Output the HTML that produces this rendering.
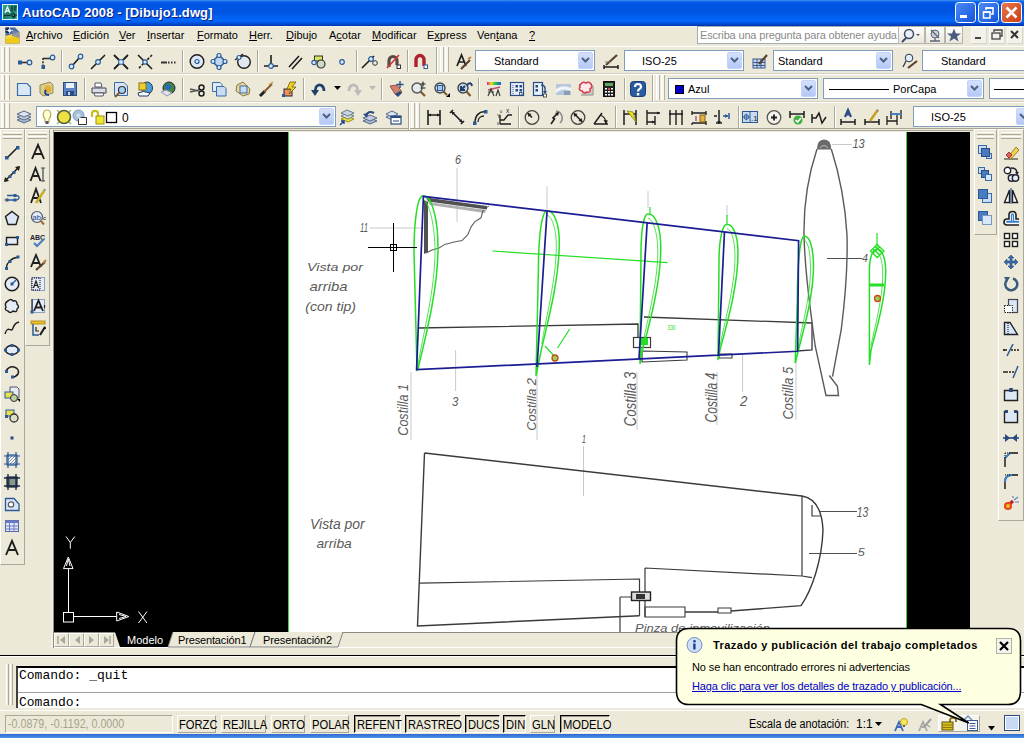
<!DOCTYPE html>
<html><head><meta charset="utf-8"><title>AutoCAD 2008</title>
<style>
*{margin:0;padding:0;box-sizing:border-box}
html,body{width:1024px;height:738px;overflow:hidden}
body{position:relative;background:#ECE9D8;font-family:"Liberation Sans",sans-serif;font-size:11px;color:#000}
.a{position:absolute}
.t{white-space:nowrap;line-height:1}
svg{overflow:visible}
u{text-decoration:underline;text-underline-offset:1px}
</style></head><body>

<div class="a" style="left:0px;top:0px;width:1024px;height:26px;background:linear-gradient(to bottom,#3C8EF3 0px,#0A5FE8 2px,#0055E5 4px,#0053E1 12px,#0262F5 18px,#0567FA 21px,#0048D0 24px,#0035A8 26px)"></div>
<svg class="a" style="left:2px;top:4px;" width="16" height="16" viewBox="0 0 16 16"><rect x="0.5" y="0.5" width="15" height="15" fill="#2A8A7A" stroke="#D8F8F0"/><path d="M1 1 H15 V15 H1Z" fill="url(#tealg)"/><path d="M3 9 L5.5 3 L8 9 M4 7 H7" stroke="#E8FFF8" stroke-width="1.3" fill="none"/><path d="M10 2 V7 M13 2 V7 M2 11.5 H8 M13 10 V14" stroke="#0E3A34" stroke-width="1.2"/><rect x="10" y="10" width="2.5" height="2.5" fill="none" stroke="#0A2A24"/><path d="M11.2 8 V9 M11.2 13 V15 M8 11.2 H9.5 M13.5 11.2 H15" stroke="#0A2A24"/></svg>
<svg width="0" height="0" style="position:absolute"><defs><linearGradient id="tealg" x1="0" y1="0" x2="1" y2="1"><stop offset="0" stop-color="#3AA890"/><stop offset="0.5" stop-color="#1E7868"/><stop offset="1" stop-color="#4AB8A8"/></linearGradient></defs></svg>
<div class="a t" style="left:22px;top:6px;color:#fff;font-weight:bold;font-size:13px;text-shadow:1px 1px 0 #0A1E80;letter-spacing:0.1px">AutoCAD 2008 - [Dibujo1.dwg]</div>
<svg class="a" style="left:955px;top:2px;" width="21" height="21" viewBox="0 0 21 21"><rect x="0.5" y="0.5" width="20" height="20" rx="3" fill="url(#gb)" stroke="#fff"/><rect x="5" y="13" width="7" height="3" fill="#fff"/></svg>
<svg class="a" style="left:978px;top:2px;" width="21" height="21" viewBox="0 0 21 21"><rect x="0.5" y="0.5" width="20" height="20" rx="3" fill="url(#gb)" stroke="#fff"/><rect x="5.5" y="10" width="6.5" height="6" fill="none" stroke="#fff" stroke-width="1.5"/><rect x="5" y="9.3" width="7.5" height="1.6" fill="#fff"/><path d="M8 8 V6 H15 V12 H13" fill="none" stroke="#fff" stroke-width="1.5"/><rect x="7.5" y="5.3" width="8" height="1.6" fill="#fff"/></svg>
<svg class="a" style="left:1001px;top:2px;" width="21" height="21" viewBox="0 0 21 21"><rect x="0.5" y="0.5" width="20" height="20" rx="3" fill="url(#gr)" stroke="#fff"/><path d="M5.5 5.5 L15.5 15.5 M15.5 5.5 L5.5 15.5" stroke="#fff" stroke-width="2.6"/></svg>
<svg width="0" height="0" style="position:absolute"><defs><linearGradient id="gb" x1="0" y1="0" x2="1" y2="1"><stop offset="0" stop-color="#4C8CF8"/><stop offset="1" stop-color="#1453D8"/></linearGradient><linearGradient id="gr" x1="0" y1="0" x2="1" y2="1"><stop offset="0" stop-color="#E8774E"/><stop offset="1" stop-color="#CC3D12"/></linearGradient></defs></svg>
<div class="a" style="left:0px;top:26px;width:1024px;height:20px;background:#ECE9D8;border-top:1px solid #F4F3EE"></div>
<svg class="a" style="left:5px;top:27px;" width="15" height="17" viewBox="0 0 15 17"><path d="M0.5 0.5 H10 L14.5 5 V16.5 H0.5 Z" fill="#4A6AA0"/><path d="M0.5 16.5 V9 L14.5 5 V16.5 Z" fill="#F2C818"/><path d="M0.5 9 L14.5 5 V9 L0.5 12 Z" fill="#F8E060" opacity="0.6"/><path d="M7 3 L14.5 5 V11 L7 9 Z" fill="#7A8AB8" opacity="0.8"/><path d="M0.5 0.5 H4 V6 H0.5Z" fill="#1A2A60"/><circle cx="4.5" cy="3.5" r="1.6" fill="#fff"/><path d="M4.5 0 V7 M1 3.5 H8" stroke="#fff" stroke-width="0.6"/></svg>
<div class="a t" style="left:26px;top:30px;font-size:11px"><u>A</u>rchivo</div>
<div class="a t" style="left:73px;top:30px;font-size:11px"><u>E</u>dición</div>
<div class="a t" style="left:119px;top:30px;font-size:11px"><u>V</u>er</div>
<div class="a t" style="left:147px;top:30px;font-size:11px"><u>I</u>nsertar</div>
<div class="a t" style="left:197px;top:30px;font-size:11px"><u>F</u>ormato</div>
<div class="a t" style="left:249px;top:30px;font-size:11px"><u>H</u>err.</div>
<div class="a t" style="left:286px;top:30px;font-size:11px"><u>D</u>ibujo</div>
<div class="a t" style="left:329px;top:30px;font-size:11px">A<u>c</u>otar</div>
<div class="a t" style="left:372px;top:30px;font-size:11px"><u>M</u>odificar</div>
<div class="a t" style="left:427px;top:30px;font-size:11px">E<u>x</u>press</div>
<div class="a t" style="left:477px;top:30px;font-size:11px">Ven<u>t</u>ana</div>
<div class="a t" style="left:529px;top:30px;font-size:11px"><u>?</u></div>
<div class="a" style="left:697px;top:26px;width:201px;height:18px;background:#fff;border:1px solid #A5ACB5;border-right:none"></div>
<div class="a t" style="left:700px;top:30px;color:#8A8A8A;font-size:11px;letter-spacing:-0.16px">Escriba una pregunta para obtener ayuda</div>
<div class="a" style="left:898px;top:26px;width:27px;height:18px;background:linear-gradient(#FDFDFB,#E9E7DE);border:1px solid #B8B6AA"></div>
<svg class="a" style="left:900px;top:27px;" width="24" height="16" viewBox="0 0 24 16"><circle cx="9" cy="7" r="4.5" fill="#E8F0F8" stroke="#3A4A66" stroke-width="1.5"/><path d="M6 11 L2 15" stroke="#3A4A66" stroke-width="2"/><path d="M16 7 L20 7 L18 9 Z" fill="#555"/></svg>
<div class="a" style="left:925px;top:26px;width:20px;height:18px;background:linear-gradient(#FDFDFB,#E9E7DE);border:1px solid #B8B6AA"></div>
<svg class="a" style="left:927px;top:27px;" width="16" height="16" viewBox="0 0 16 16"><circle cx="8" cy="7" r="4" fill="#C8D0DC" stroke="#5A6478"/><path d="M3 14 H13 M8 11 V14 M4 3 L12 11" stroke="#5A6478" stroke-width="1.3"/></svg>
<div class="a" style="left:945px;top:26px;width:18px;height:18px;background:linear-gradient(#FDFDFB,#E9E7DE);border:1px solid #B8B6AA"></div>
<svg class="a" style="left:946px;top:27px;" width="16" height="16" viewBox="0 0 16 16"><path d="M8 1.5 L10 6.5 L15 6.5 L11 9.5 L12.5 14.5 L8 11.5 L3.5 14.5 L5 9.5 L1 6.5 L6 6.5 Z" fill="#4D5A80"/></svg>
<div class="a" style="left:971px;top:27px;width:16px;height:17px;background:#F2F1EA;border:1px solid #F8F8F4;border-right-color:#D8D6CC;border-bottom-color:#D8D6CC"></div>
<div class="a" style="left:989px;top:27px;width:16px;height:17px;background:#F2F1EA;border:1px solid #F8F8F4;border-right-color:#D8D6CC;border-bottom-color:#D8D6CC"></div>
<div class="a" style="left:1007px;top:27px;width:16px;height:17px;background:#F2F1EA;border:1px solid #F8F8F4;border-right-color:#D8D6CC;border-bottom-color:#D8D6CC"></div>
<svg class="a" style="left:971px;top:27px;" width="51" height="17" viewBox="0 0 51 17"><rect x="4" y="10" width="6" height="2" fill="#444"/><rect x="21" y="6" width="8" height="6" fill="none" stroke="#444" stroke-width="1.3"/><path d="M23 5 V3 H31 V9 H29" fill="none" stroke="#444" stroke-width="1.3"/><path d="M40 4 L47 11 M47 4 L40 11" stroke="#333" stroke-width="2"/></svg>

<!-- toolbars -->

<div class="a" style="left:0px;top:46px;width:1024px;height:28px;background:#ECE9D8;border-top:1px solid #FFFFFF;border-bottom:1px solid #D4D0C2"></div>
<div class="a" style="left:0px;top:74px;width:1024px;height:28px;background:#ECE9D8;border-top:1px solid #FFFFFF;border-bottom:1px solid #D4D0C2"></div>
<div class="a" style="left:0px;top:102px;width:1024px;height:28px;background:#ECE9D8;border-top:1px solid #FFFFFF;border-bottom:1px solid #D4D0C2"></div>
<div class="a" style="left:0px;top:128px;width:1024px;height:4px;background:#ECE9D8;border-top:1px solid #A8A594"></div>
<div class="a" style="left:1px;top:47px;width:4px;height:25px;background:#F6F5EE;border-left:1px solid #fff;border-right:1px solid #B5B2A2"></div>
<div class="a" style="left:6px;top:47px;width:4px;height:25px;background:#F6F5EE;border-left:1px solid #fff;border-right:1px solid #B5B2A2"></div>
<div class="a" style="left:475px;top:50px;width:120px;height:21px;background:#fff;border:1px solid #7F9DB9;"></div>
<div class="a" style="left:578px;top:52px;width:15px;height:17px;background:linear-gradient(#D5E1FB,#B4C8F6);border:1px solid #C2D3FC;border-radius:2px"></div>
<svg class="a" style="left:581px;top:57px;" width="9" height="6" viewBox="0 0 9 6"><path d="M1 1 L4.5 4.5 L8 1" fill="none" stroke="#4D6185" stroke-width="2"/></svg>
<div class="a t" style="left:494px;top:56px;font-size:11px">Standard</div>
<div class="a" style="left:624px;top:50px;width:120px;height:21px;background:#fff;border:1px solid #7F9DB9;"></div>
<div class="a" style="left:727px;top:52px;width:15px;height:17px;background:linear-gradient(#D5E1FB,#B4C8F6);border:1px solid #C2D3FC;border-radius:2px"></div>
<svg class="a" style="left:730px;top:57px;" width="9" height="6" viewBox="0 0 9 6"><path d="M1 1 L4.5 4.5 L8 1" fill="none" stroke="#4D6185" stroke-width="2"/></svg>
<div class="a t" style="left:642px;top:56px;font-size:11px">ISO-25</div>
<div class="a" style="left:773px;top:50px;width:120px;height:21px;background:#fff;border:1px solid #7F9DB9;"></div>
<div class="a" style="left:876px;top:52px;width:15px;height:17px;background:linear-gradient(#D5E1FB,#B4C8F6);border:1px solid #C2D3FC;border-radius:2px"></div>
<svg class="a" style="left:879px;top:57px;" width="9" height="6" viewBox="0 0 9 6"><path d="M1 1 L4.5 4.5 L8 1" fill="none" stroke="#4D6185" stroke-width="2"/></svg>
<div class="a t" style="left:778px;top:56px;font-size:11px">Standard</div>
<div class="a" style="left:922px;top:50px;width:130px;height:21px;background:#fff;border:1px solid #7F9DB9;"></div>
<div class="a" style="left:1035px;top:52px;width:15px;height:17px;background:linear-gradient(#D5E1FB,#B4C8F6);border:1px solid #C2D3FC;border-radius:2px"></div>
<svg class="a" style="left:1038px;top:57px;" width="9" height="6" viewBox="0 0 9 6"><path d="M1 1 L4.5 4.5 L8 1" fill="none" stroke="#4D6185" stroke-width="2"/></svg>
<div class="a t" style="left:941px;top:56px;font-size:11px">Standard</div>
<div class="a" style="left:440px;top:47px;width:4px;height:25px;background:#F6F5EE;border-left:1px solid #fff;border-right:1px solid #B5B2A2"></div>
<div class="a" style="left:445px;top:47px;width:4px;height:25px;background:#F6F5EE;border-left:1px solid #fff;border-right:1px solid #B5B2A2"></div>
<div class="a" style="left:1px;top:75px;width:4px;height:25px;background:#F6F5EE;border-left:1px solid #fff;border-right:1px solid #B5B2A2"></div>
<div class="a" style="left:6px;top:75px;width:4px;height:25px;background:#F6F5EE;border-left:1px solid #fff;border-right:1px solid #B5B2A2"></div>
<div class="a" style="left:668px;top:78px;width:150px;height:21px;background:#fff;border:1px solid #7F9DB9;"></div>
<div class="a" style="left:801px;top:80px;width:15px;height:17px;background:linear-gradient(#D5E1FB,#B4C8F6);border:1px solid #C2D3FC;border-radius:2px"></div>
<svg class="a" style="left:804px;top:85px;" width="9" height="6" viewBox="0 0 9 6"><path d="M1 1 L4.5 4.5 L8 1" fill="none" stroke="#4D6185" stroke-width="2"/></svg>
<div class="a" style="left:675px;top:85px;width:9px;height:9px;background:#0000CC;border:1px solid #000"></div>
<div class="a t" style="left:688px;top:84px;">Azul</div>
<div class="a" style="left:823px;top:78px;width:161px;height:21px;background:#fff;border:1px solid #7F9DB9;"></div>
<div class="a" style="left:967px;top:80px;width:15px;height:17px;background:linear-gradient(#D5E1FB,#B4C8F6);border:1px solid #C2D3FC;border-radius:2px"></div>
<svg class="a" style="left:970px;top:85px;" width="9" height="6" viewBox="0 0 9 6"><path d="M1 1 L4.5 4.5 L8 1" fill="none" stroke="#4D6185" stroke-width="2"/></svg>
<div class="a" style="left:829px;top:89px;width:60px;height:1px;background:#000"></div>
<div class="a t" style="left:893px;top:84px;">PorCapa</div>
<div class="a" style="left:989px;top:78px;width:60px;height:21px;background:#fff;border:1px solid #7F9DB9;"></div>
<div class="a" style="left:1032px;top:80px;width:15px;height:17px;background:linear-gradient(#D5E1FB,#B4C8F6);border:1px solid #C2D3FC;border-radius:2px"></div>
<svg class="a" style="left:1035px;top:85px;" width="9" height="6" viewBox="0 0 9 6"><path d="M1 1 L4.5 4.5 L8 1" fill="none" stroke="#4D6185" stroke-width="2"/></svg>
<div class="a" style="left:994px;top:89px;width:40px;height:1px;background:#000"></div>
<div class="a" style="left:656px;top:75px;width:4px;height:25px;background:#F6F5EE;border-left:1px solid #fff;border-right:1px solid #B5B2A2"></div>
<div class="a" style="left:661px;top:75px;width:4px;height:25px;background:#F6F5EE;border-left:1px solid #fff;border-right:1px solid #B5B2A2"></div>
<div class="a" style="left:1px;top:103px;width:4px;height:25px;background:#F6F5EE;border-left:1px solid #fff;border-right:1px solid #B5B2A2"></div>
<div class="a" style="left:6px;top:103px;width:4px;height:25px;background:#F6F5EE;border-left:1px solid #fff;border-right:1px solid #B5B2A2"></div>
<div class="a" style="left:36px;top:106px;width:300px;height:21px;background:#fff;border:1px solid #7F9DB9;"></div>
<div class="a" style="left:319px;top:108px;width:15px;height:17px;background:linear-gradient(#D5E1FB,#B4C8F6);border:1px solid #C2D3FC;border-radius:2px"></div>
<svg class="a" style="left:322px;top:113px;" width="9" height="6" viewBox="0 0 9 6"><path d="M1 1 L4.5 4.5 L8 1" fill="none" stroke="#4D6185" stroke-width="2"/></svg>
<div class="a t" style="left:122px;top:112px;font-size:12px">0</div>
<div class="a" style="left:913px;top:106px;width:120px;height:21px;background:#fff;border:1px solid #7F9DB9;"></div>
<div class="a" style="left:1016px;top:108px;width:15px;height:17px;background:linear-gradient(#D5E1FB,#B4C8F6);border:1px solid #C2D3FC;border-radius:2px"></div>
<svg class="a" style="left:1019px;top:113px;" width="9" height="6" viewBox="0 0 9 6"><path d="M1 1 L4.5 4.5 L8 1" fill="none" stroke="#4D6185" stroke-width="2"/></svg>
<div class="a t" style="left:931px;top:112px;font-size:11px">ISO-25</div>
<div class="a" style="left:411px;top:103px;width:4px;height:25px;background:#F6F5EE;border-left:1px solid #fff;border-right:1px solid #B5B2A2"></div>
<div class="a" style="left:416px;top:103px;width:4px;height:25px;background:#F6F5EE;border-left:1px solid #fff;border-right:1px solid #B5B2A2"></div>
<svg width="0" height="0" style="position:absolute"><defs><linearGradient id="rainbow"><stop offset="0" stop-color="#E02080"/><stop offset="0.3" stop-color="#F0E020"/><stop offset="0.6" stop-color="#20C040"/><stop offset="1" stop-color="#2060E0"/></linearGradient></defs></svg>
<svg class="a" style="left:16px;top:53px;" width="16" height="16" viewBox="0 0 16 16"><path d="M6 9.5 H12" stroke="#333" stroke-width="1.6"/><rect x="2" y="7.5" width="4" height="4" fill="#2C5A96"/><circle cx="13.5" cy="9.5" r="2.3" fill="#D6ECFF" stroke="#2C5A96" stroke-width="1.2"/></svg>
<svg class="a" style="left:39px;top:53px;" width="16" height="16" viewBox="0 0 16 16"><path d="M4 5.5 H12" stroke="#333" stroke-width="1.6"/><path d="M4 5 V13" stroke="#333" stroke-width="1.6" stroke-dasharray="2 1.2"/><rect x="2.5" y="12" width="3.5" height="4" fill="#2C5A96"/><circle cx="13.5" cy="4.5" r="2.3" fill="#D6ECFF" stroke="#2C5A96" stroke-width="1.2"/></svg>
<svg class="a" style="left:68px;top:53px;" width="16" height="16" viewBox="0 0 16 16"><path d="M4 13 L12 4" stroke="#1E1E1E" stroke-width="1.6"/><circle cx="3.5" cy="13.5" r="2.3" fill="#D6ECFF" stroke="#2C5A96" stroke-width="1.2"/><circle cx="12.5" cy="3.5" r="2.3" fill="#D6ECFF" stroke="#2C5A96" stroke-width="1.2"/></svg>
<svg class="a" style="left:90px;top:53px;" width="16" height="16" viewBox="0 0 16 16"><path d="M1 16 L15 2" stroke="#1E1E1E" stroke-width="1.6"/><circle cx="8" cy="9" r="2.3" fill="#D6ECFF" stroke="#2C5A96" stroke-width="1.2"/></svg>
<svg class="a" style="left:113px;top:53px;" width="16" height="16" viewBox="0 0 16 16"><path d="M1 2 L15 16 M15 2 L1 16" stroke="#1E1E1E" stroke-width="1.8"/><rect x="5.8" y="6.8" width="4.4" height="4.4" fill="#D6ECFF" stroke="#2C5A96"/></svg>
<svg class="a" style="left:137px;top:53px;" width="16" height="16" viewBox="0 0 16 16"><path d="M1 2 L15 16" stroke="#1E1E1E" stroke-width="1.6"/><path d="M15 2 L1 16" stroke="#1E1E1E" stroke-width="1.6" stroke-dasharray="2.5 1.5"/><circle cx="8" cy="9" r="2.2" fill="#D6ECFF" stroke="#2C5A96" stroke-width="1.2"/></svg>
<svg class="a" style="left:160px;top:53px;" width="16" height="16" viewBox="0 0 16 16"><path d="M1 9.5 H7" stroke="#333" stroke-width="2"/><path d="M8 9.5 H16" stroke="#333" stroke-width="2" stroke-dasharray="1.5 1.5"/></svg>
<svg class="a" style="left:189px;top:53px;" width="16" height="16" viewBox="0 0 16 16"><circle cx="8" cy="8.5" r="6.8" fill="#DCE8F4" stroke="#1E1E1E" stroke-width="1.4"/><circle cx="8" cy="8.5" r="2" fill="#D6ECFF" stroke="#2C5A96" stroke-width="1.2"/></svg>
<svg class="a" style="left:211px;top:53px;" width="16" height="16" viewBox="0 0 16 16"><path d="M8 2 L14.5 8.5 L8 15 L1.5 8.5 Z" fill="#BFD8F0" stroke="#2C5A96" stroke-width="1.5"/><circle cx="8" cy="2.5" r="2" fill="#D6ECFF" stroke="#2C5A96" stroke-width="1.2"/><circle cx="14" cy="8.5" r="2" fill="#D6ECFF" stroke="#2C5A96" stroke-width="1.2"/><circle cx="8" cy="14.5" r="2" fill="#D6ECFF" stroke="#2C5A96" stroke-width="1.2"/><circle cx="2" cy="8.5" r="2" fill="#D6ECFF" stroke="#2C5A96" stroke-width="1.2"/></svg>
<svg class="a" style="left:235px;top:53px;" width="16" height="16" viewBox="0 0 16 16"><circle cx="9" cy="9" r="6.3" fill="#E2E8EF" stroke="#1E1E1E" stroke-width="1.4"/><path d="M0 7 L8 1" stroke="#1E1E1E" stroke-width="1.3"/><circle cx="4" cy="4.5" r="2" fill="#D6ECFF" stroke="#2C5A96" stroke-width="1.2"/></svg>
<svg class="a" style="left:263px;top:53px;" width="16" height="16" viewBox="0 0 16 16"><path d="M1 13 H15 M8 2 V13" stroke="#1E1E1E" stroke-width="1.6"/><circle cx="8" cy="13" r="2.3" fill="#D6ECFF" stroke="#2C5A96" stroke-width="1.2"/></svg>
<svg class="a" style="left:287px;top:53px;" width="16" height="16" viewBox="0 0 16 16"><path d="M2 14 L12 3 M5 16 L15 5" stroke="#1E1E1E" stroke-width="1.6"/></svg>
<svg class="a" style="left:310px;top:53px;" width="16" height="16" viewBox="0 0 16 16"><rect x="4.5" y="3" width="8" height="5" fill="#D8E65A" stroke="#333"/><circle cx="11" cy="11" r="4" fill="#CFD9C8" stroke="#333" stroke-width="1.2"/><circle cx="4" cy="9.5" r="2.2" fill="#D6ECFF" stroke="#2C5A96" stroke-width="1.2"/></svg>
<svg class="a" style="left:334px;top:53px;" width="16" height="16" viewBox="0 0 16 16"><circle cx="8" cy="9" r="2.3" fill="#D6ECFF" stroke="#2C5A96" stroke-width="1.2"/></svg>
<svg class="a" style="left:361px;top:53px;" width="16" height="16" viewBox="0 0 16 16"><path d="M1 15 L13 3" stroke="#1E1E1E" stroke-width="1.6"/><circle cx="10" cy="6" r="2.3" fill="#D6ECFF" stroke="#2C5A96" stroke-width="1.2"/><circle cx="14" cy="10" r="2.3" fill="#eee" stroke="#333"/></svg>
<svg class="a" style="left:385px;top:53px;" width="16" height="16" viewBox="0 0 16 16"><path d="M4 14 V8 C4 2,12 2,12 8 V12" stroke="#5B4A44" stroke-width="3.2" fill="none"/><path d="M2 15 L14 2" stroke="#D23232" stroke-width="1.6"/><rect x="12" y="12" width="3.5" height="3.5" fill="#fff" stroke="#333"/></svg>
<svg class="a" style="left:412px;top:53px;" width="16" height="16" viewBox="0 0 16 16"><path d="M4 14 V7 C4 1,12 1,12 7 V13" stroke="#B0202E" stroke-width="3.4" fill="none"/><rect x="12" y="12" width="3.5" height="3.5" fill="#fff" stroke="#2C5A96"/></svg>
<svg class="a" style="left:455px;top:53px;" width="16" height="16" viewBox="0 0 16 16"><path d="M2 13 L6.5 2 L11 13 M3.8 9 H9.2" stroke="#1E1E1E" stroke-width="1.7" fill="none"/><path d="M6 16 L15 7" stroke="#5A4030" stroke-width="2.2"/><path d="M13 6 L16 4" stroke="#C08040" stroke-width="2"/></svg>
<svg class="a" style="left:603px;top:53px;" width="16" height="16" viewBox="0 0 16 16"><path d="M1 12 V16 M15 12 V16 M1 14 H15" stroke="#1E1E1E" stroke-width="1.5"/><path d="M3 12 L14 2" stroke="#5A4030" stroke-width="2.2"/><path d="M2 9 H7" stroke="#777"/></svg>
<svg class="a" style="left:752px;top:53px;" width="16" height="16" viewBox="0 0 16 16"><rect x="1" y="6" width="12" height="9" fill="#C8D8F0" stroke="#3A5A90"/><path d="M1 9.5 H13 M1 12.5 H13 M5 6 V15 M9 6 V15" stroke="#3A5A90"/><path d="M7 11 L15 2" stroke="#5A4030" stroke-width="2.2"/></svg>
<svg class="a" style="left:901px;top:53px;" width="16" height="16" viewBox="0 0 16 16"><circle cx="8" cy="5" r="3.8" fill="#DDEEFF" stroke="#334"/><path d="M5 8 L2 14" stroke="#334" stroke-width="1.3"/><path d="M7 15 L16 8" stroke="#5A4030" stroke-width="2.2"/></svg>
<div class="a" style="left:61px;top:50px;width:2px;height:22px;border-left:1px solid #ACA899;border-right:1px solid #fff"></div>
<div class="a" style="left:182px;top:50px;width:2px;height:22px;border-left:1px solid #ACA899;border-right:1px solid #fff"></div>
<div class="a" style="left:257px;top:50px;width:2px;height:22px;border-left:1px solid #ACA899;border-right:1px solid #fff"></div>
<div class="a" style="left:356px;top:50px;width:2px;height:22px;border-left:1px solid #ACA899;border-right:1px solid #fff"></div>
<div class="a" style="left:407px;top:50px;width:2px;height:22px;border-left:1px solid #ACA899;border-right:1px solid #fff"></div>
<div class="a" style="left:436px;top:47px;width:2px;height:27px;border-left:1px solid #ACA899;border-right:1px solid #fff"></div>
<svg class="a" style="left:16px;top:81px;" width="16" height="16" viewBox="0 0 16 16"><path d="M1.5 2.5 H11 L14.5 6 V14.5 H1.5 Z" fill="#D8E8F6" stroke="#3D6AA8" stroke-width="1.2"/></svg>
<svg class="a" style="left:39px;top:81px;" width="16" height="16" viewBox="0 0 16 16"><path d="M1 4 L11 1 L14 4 L14 12 L4 15 L1 12 Z" fill="#D8CC90" stroke="#9A8A50"/><circle cx="9" cy="8" r="3.5" fill="#E0B030"/><path d="M7 9 C5 11,6 14,10 14" stroke="#1F3F8F" stroke-width="2" fill="none"/></svg>
<svg class="a" style="left:62px;top:81px;" width="16" height="16" viewBox="0 0 16 16"><rect x="1.5" y="1.5" width="13" height="13" fill="#5C84C4" stroke="#2A4A80"/><rect x="4" y="2" width="8" height="5" fill="#E8F0FA"/><rect x="4" y="10" width="8" height="4.5" fill="#2A4A80"/><rect x="6" y="11" width="2" height="3" fill="#C8D8F0"/></svg>
<svg class="a" style="left:91px;top:81px;" width="16" height="16" viewBox="0 0 16 16"><path d="M4 2 H10 L11 6 H4 Z" fill="#fff" stroke="#556"/><path d="M1 7 H15 V12 H1 Z" fill="#D8DDE8" stroke="#445"/><path d="M3 12 H13 L12 15 H4 Z" fill="#fff" stroke="#556"/></svg>
<svg class="a" style="left:113px;top:81px;" width="16" height="16" viewBox="0 0 16 16"><path d="M1.5 1.5 H11 L14.5 5 V14.5 H1.5 Z" fill="#D8E6F8" stroke="#3D6AA8"/><circle cx="9" cy="9" r="3.5" fill="#A8D0F0" stroke="#334" stroke-width="1.2"/><path d="M6.5 11.5 L2 16" stroke="#8A5A20" stroke-width="2"/></svg>
<svg class="a" style="left:137px;top:81px;" width="16" height="16" viewBox="0 0 16 16"><ellipse cx="10" cy="7" rx="5.5" ry="6" fill="#48A0D8" stroke="#236"/><rect x="2" y="2" width="7" height="7" fill="#F0D030" stroke="#8A7010"/><path d="M1 12 Q6 9 13 12 L11 15 H2 Z" fill="#fff" stroke="#236"/></svg>
<svg class="a" style="left:160px;top:81px;" width="16" height="16" viewBox="0 0 16 16"><circle cx="9" cy="7" r="6" fill="#3C8840" stroke="#224"/><path d="M5 4 Q9 2 12 6 Q9 10 6 9" fill="#2A68B8"/><path d="M1 11 L6 9 L12 12 L7 15 Z" fill="#E0E0F0" stroke="#99A"/></svg>
<svg class="a" style="left:189px;top:81px;" width="16" height="16" viewBox="0 0 16 16"><path d="M1 8 L10 10 M1 11 L10 9" stroke="#555" stroke-width="1.4"/><circle cx="12.5" cy="6.5" r="2.5" fill="none" stroke="#1E1E1E" stroke-width="1.5"/><circle cx="12.5" cy="12.5" r="2.5" fill="none" stroke="#1E1E1E" stroke-width="1.5"/></svg>
<svg class="a" style="left:211px;top:81px;" width="16" height="16" viewBox="0 0 16 16"><path d="M1.5 1.5 H9 L11 3.5 V10.5 H1.5 Z" fill="#E0ECF8" stroke="#3D6AA8"/><path d="M5.5 5.5 H13 L15 7.5 V15 H5.5 Z" fill="#C8DCF2" stroke="#3D6AA8"/></svg>
<svg class="a" style="left:235px;top:81px;" width="16" height="16" viewBox="0 0 16 16"><path d="M2 4 L8 1 L15 8 L14 13 L8 15 L1 10 Z" fill="#E8D8A0" stroke="#8A7A40"/><rect x="5" y="5" width="7" height="7" fill="#C8DCF2" stroke="#3D6AA8"/></svg>
<svg class="a" style="left:258px;top:81px;" width="16" height="16" viewBox="0 0 16 16"><path d="M2 15 L7 10" stroke="#222" stroke-width="3"/><path d="M6 11 L14 3" stroke="#8A5A30" stroke-width="2"/><path d="M11 4 L15 1" stroke="#C09050" stroke-width="1.5"/></svg>
<svg class="a" style="left:281px;top:81px;" width="16" height="16" viewBox="0 0 16 16"><rect x="3" y="8" width="8" height="7" fill="#F09060" stroke="#223"/><path d="M9 1 L15 1 L11 6 L15 6 L8 13 L10 8 L6 8 Z" fill="#F0D020" stroke="#6A5A10" stroke-width="0.8"/><rect x="1" y="13" width="3" height="3" fill="#2C5A96"/></svg>
<svg class="a" style="left:311px;top:81px;" width="16" height="16" viewBox="0 0 16 16"><path d="M13 10 C13 4,8 2,5 6 L4 11" stroke="#1F3F6F" stroke-width="2.6" fill="none"/><path d="M0 9 L4 15 L8 9 Z" fill="#1F3F6F"/></svg>
<svg class="a" style="left:346px;top:81px;" width="16" height="16" viewBox="0 0 16 16"><path d="M3 10 C3 4,8 2,11 6 L12 11" stroke="#BBBBB8" stroke-width="2.6" fill="none"/><path d="M16 9 L12 15 L8 9 Z" fill="#BBBBB8"/></svg>
<svg class="a" style="left:388px;top:81px;" width="16" height="16" viewBox="0 0 16 16"><path d="M2 5 L7 13 L10 15 L14 11 L9 4 Z" fill="#D08070" stroke="#9A5040"/><path d="M7 13 L10 16 L14 12 L12 10 Z" fill="#2A4A80"/><path d="M12 0 V7 M8.5 3.5 H15.5" stroke="#2A4A80" stroke-width="1.3"/></svg>
<svg class="a" style="left:411px;top:81px;" width="16" height="16" viewBox="0 0 16 16"><circle cx="6" cy="7" r="5" fill="#E4EAF0" stroke="#555" stroke-width="1.4"/><path d="M9.5 10.5 L14 15" stroke="#7A5A30" stroke-width="2.2"/><path d="M12 0.5 V5.5 M9.5 3 H14.5 M9.5 7 H14.5" stroke="#222" stroke-width="1.1"/></svg>
<svg class="a" style="left:434px;top:81px;" width="16" height="16" viewBox="0 0 16 16"><circle cx="6" cy="7" r="5" fill="#C8D8EC" stroke="#444" stroke-width="1.4"/><rect x="3.5" y="4.5" width="5" height="5" fill="#A8C8F0" stroke="#2C5A96"/><path d="M9.5 10.5 L13 14" stroke="#7A5A30" stroke-width="2.2"/><path d="M16 12 V16 H12 Z" fill="#000"/></svg>
<svg class="a" style="left:457px;top:81px;" width="16" height="16" viewBox="0 0 16 16"><circle cx="6" cy="7" r="5" fill="#C8D8EC" stroke="#444" stroke-width="1.4"/><path d="M4 9 L8 5 M4 5 V9 H8" stroke="#1F3F6F" stroke-width="2" fill="none"/><path d="M10 4 Q14 0 15 5" stroke="#1F3F6F" stroke-width="2" fill="none"/><path d="M9.5 10.5 L13.5 15" stroke="#7A5A30" stroke-width="2.2"/></svg>
<svg class="a" style="left:486px;top:81px;" width="16" height="16" viewBox="0 0 16 16"><rect x="1" y="1" width="14" height="3" fill="url(#rainbow)"/><path d="M2 9 L14 6" stroke="#C05070" stroke-width="1.5"/><path d="M2 11 H8" stroke="#557"/><path d="M2 15 L5 8 L8 15 M10 15 L12 9 L14 15" stroke="#333" stroke-width="1.1" fill="none"/></svg>
<svg class="a" style="left:509px;top:81px;" width="16" height="16" viewBox="0 0 16 16"><rect x="1.5" y="1.5" width="13" height="13" fill="#E8F0FA" stroke="#2A4A80" stroke-width="1.2"/><path d="M4 4 V13" stroke="#2A4A80" stroke-dasharray="1 1"/><rect x="6.5" y="4" width="2.5" height="2.5" fill="#2A4A80"/><rect x="10.5" y="4" width="2.5" height="2.5" fill="#2A4A80"/><rect x="6.5" y="8" width="2.5" height="2.5" fill="#2A4A80"/><rect x="10.5" y="8" width="2.5" height="2.5" fill="#2A4A80"/><rect x="10.5" y="11.5" width="2.5" height="2.5" fill="#fff" stroke="#2A4A80" stroke-width="0.8"/></svg>
<svg class="a" style="left:532px;top:81px;" width="16" height="16" viewBox="0 0 16 16"><rect x="1.5" y="1.5" width="9" height="13" fill="#E8F0FA" stroke="#2A4A80" stroke-width="1.2"/><rect x="3.5" y="4" width="2.5" height="2.5" fill="#2A4A80"/><rect x="3.5" y="8" width="2.5" height="2.5" fill="#2A4A80"/><path d="M9 4 Q14 4 13 10" stroke="#2A4A80" stroke-width="1.4" fill="none"/><path d="M11 10 H15 L13 13Z" fill="#2A4A80"/><rect x="11.5" y="13" width="3" height="3" fill="#fff" stroke="#333" stroke-width="0.8"/></svg>
<svg class="a" style="left:555px;top:81px;" width="16" height="16" viewBox="0 0 16 16"><rect x="1" y="3" width="15" height="11" fill="#B8C8DC"/><path d="M1 8 Q8 3 16 7 V10 Q8 6 1 12Z" fill="#F0F4F8"/><path d="M9 10 H15 V14 H9Z" fill="#8A9CB8"/></svg>
<svg class="a" style="left:578px;top:81px;" width="16" height="16" viewBox="0 0 16 16"><path d="M3 14 H15 V5" stroke="#888" fill="none"/><path d="M4 13 H14 V4" stroke="#AAA" fill="none"/><path d="M3 3 Q5 0 8 2 Q11 0 13 3 Q15 6 12 8 Q13 12 9 11 Q6 13 4 10 Q0 9 2 6 Q1 4 3 3Z" fill="#FCE8E8" stroke="#D04050" stroke-width="1.6"/></svg>
<svg class="a" style="left:601px;top:81px;" width="16" height="16" viewBox="0 0 16 16"><rect x="2.5" y="0.5" width="11" height="15" fill="#222" stroke="#111"/><rect x="4" y="2" width="8" height="3" fill="#60A860"/><g fill="#fff"><rect x="4" y="7" width="2" height="1.5"/><rect x="7" y="7" width="2" height="1.5"/><rect x="10" y="7" width="2" height="1.5"/><rect x="4" y="10" width="2" height="1.5"/><rect x="7" y="10" width="2" height="1.5"/><rect x="10" y="10" width="2" height="1.5"/><rect x="4" y="13" width="2" height="1.5"/><rect x="7" y="13" width="2" height="1.5"/><rect x="10" y="13" width="2" height="1.5"/></g><rect x="7" y="7" width="2" height="1.5" fill="#E04040"/></svg>
<svg class="a" style="left:630px;top:81px;" width="16" height="16" viewBox="0 0 16 16"><rect x="0.5" y="0.5" width="15" height="15" rx="3" fill="#2A5AA0" stroke="#1A3A70"/><path d="M5 6 C5 2,11 2,11 6 C11 8,8 8,8 10.5" stroke="#fff" stroke-width="2.2" fill="none"/><rect x="6.8" y="12" width="2.5" height="2.5" fill="#fff"/></svg>
<svg class="a" style="left:334px;top:86px;" width="8" height="5" viewBox="0 0 8 5"><path d="M0 0 H7 L3.5 4Z" fill="#000"/></svg>
<svg class="a" style="left:369px;top:86px;" width="8" height="5" viewBox="0 0 8 5"><path d="M0 0 H7 L3.5 4Z" fill="#B8B8B4"/></svg>
<div class="a" style="left:84px;top:78px;width:2px;height:22px;border-left:1px solid #ACA899;border-right:1px solid #fff"></div>
<div class="a" style="left:182px;top:78px;width:2px;height:22px;border-left:1px solid #ACA899;border-right:1px solid #fff"></div>
<div class="a" style="left:303px;top:78px;width:2px;height:22px;border-left:1px solid #ACA899;border-right:1px solid #fff"></div>
<div class="a" style="left:381px;top:78px;width:2px;height:22px;border-left:1px solid #ACA899;border-right:1px solid #fff"></div>
<div class="a" style="left:478px;top:78px;width:2px;height:22px;border-left:1px solid #ACA899;border-right:1px solid #fff"></div>
<div class="a" style="left:624px;top:78px;width:2px;height:22px;border-left:1px solid #ACA899;border-right:1px solid #fff"></div>
<div class="a" style="left:652px;top:75px;width:2px;height:27px;border-left:1px solid #ACA899;border-right:1px solid #fff"></div>
<svg class="a" style="left:16px;top:109px;" width="16" height="16" viewBox="0 0 16 16"><path d="M1 11 L8 14 L15 11 L8 8 Z" fill="#A8B8D0" stroke="#5A6A88"/><path d="M1 8 L8 11 L15 8 L8 5 Z" fill="#C0CCE0" stroke="#5A6A88"/><path d="M1 5 L8 8 L15 5 L8 2 Z" fill="#DCE4F0" stroke="#5A6A88"/></svg>
<svg class="a" style="left:339px;top:109px;" width="16" height="16" viewBox="0 0 16 16"><path d="M2 10 L9 13 L15 10 L8 7 Z" fill="#E8E040" stroke="#A09010"/><path d="M2 7 L9 10 L15 7 L8 4 Z" fill="#D8E0D0" stroke="#6A7A88"/><path d="M2 4 L9 7 L15 4 L8 1 Z" fill="#C8D4E4" stroke="#6A7A88"/><path d="M1 16 L5 12 M2 12 H5 V15" stroke="#1F3F8F" stroke-width="1.4" fill="none"/></svg>
<svg class="a" style="left:362px;top:109px;" width="16" height="16" viewBox="0 0 16 16"><path d="M1 12 L8 15 L15 12 L8 9 Z" fill="#A8B8D0" stroke="#5A6A88"/><path d="M1 9 L8 12 L15 9 L8 6 Z" fill="#C0CCE0" stroke="#5A6A88"/><path d="M4 7 Q6 1 12 4" stroke="#2A4A80" stroke-width="2.2" fill="none"/><path d="M1 5 L5 9 L6 4Z" fill="#2A4A80"/></svg>
<svg class="a" style="left:385px;top:109px;" width="16" height="16" viewBox="0 0 16 16"><path d="M1 8 L7 11 L13 8 L7 5 Z" fill="#C0CCE0" stroke="#5A6A88"/><path d="M1 5 L7 8 L13 5 L7 2 Z" fill="#DCE4F0" stroke="#5A6A88"/><rect x="6" y="7" width="10" height="8" fill="#fff" stroke="#2A4A80" stroke-width="1.2"/><rect x="6" y="7" width="10" height="2" fill="#2A4A80"/><path d="M8 12 H14" stroke="#2A4A80"/></svg>
<svg class="a" style="left:426px;top:109px;" width="16" height="16" viewBox="0 0 16 16"><path d="M2 1 V16 M14 1 V16 M2 6 H14" stroke="#1E1E1E" stroke-width="1.6"/><path d="M2 6 L5 4.5 V7.5Z M14 6 L11 4.5 V7.5Z" fill="#1E1E1E"/></svg>
<svg class="a" style="left:449px;top:109px;" width="16" height="16" viewBox="0 0 16 16"><path d="M1 4 L4 1 M12 15 L15 12 M2.5 2.5 L13.5 13.5" stroke="#1E1E1E" stroke-width="1.6"/><path d="M2.5 2.5 L6 3.5 L3.5 6Z M13.5 13.5 L10 12.5 L12.5 10Z" fill="#1E1E1E"/></svg>
<svg class="a" style="left:472px;top:109px;" width="16" height="16" viewBox="0 0 16 16"><path d="M3 14 C3 6,8 2,13 3" stroke="#1E1E1E" stroke-width="1.5" fill="none"/><path d="M6 13 C6 9,9 7,12 7" stroke="#1E1E1E" stroke-width="1.3" fill="none"/><rect x="12" y="1" width="3.5" height="3.5" fill="#2C5A96"/><rect x="1" y="12.5" width="3.5" height="3.5" fill="#2C5A96"/></svg>
<svg class="a" style="left:497px;top:109px;" width="16" height="16" viewBox="0 0 16 16"><path d="M3 15 V6 M3 11 L7 11 L11 6 H15 M3 15 H14" stroke="#1E1E1E" stroke-width="1.3" fill="none"/><text x="0" y="9" font-size="5" font-family="Liberation Sans">Y</text><text x="9" y="4" font-size="5" font-family="Liberation Sans">X</text><text x="0" y="16" font-size="4" font-family="Liberation Sans">0</text><text x="3" y="4" font-size="4" font-family="Liberation Sans">0</text></svg>
<svg class="a" style="left:524px;top:109px;" width="16" height="16" viewBox="0 0 16 16"><circle cx="8" cy="8.5" r="6.8" fill="none" stroke="#444" stroke-width="1.3"/><path d="M8 8.5 L4 4.5" stroke="#1E1E1E" stroke-width="1.6"/><path d="M3.5 4 L7.5 5 L4.5 8 Z" fill="#1E1E1E"/></svg>
<svg class="a" style="left:547px;top:109px;" width="16" height="16" viewBox="0 0 16 16"><path d="M9 2 A7 7 0 0 1 13 14" stroke="#888" stroke-width="1.5" fill="none"/><path d="M4 15 L7.5 10 L6 9 L11 4" stroke="#1E1E1E" stroke-width="1.6" fill="none"/><path d="M12 3 L8 4 L11 7Z" fill="#1E1E1E"/></svg>
<svg class="a" style="left:570px;top:109px;" width="16" height="16" viewBox="0 0 16 16"><circle cx="8" cy="8.5" r="6.8" fill="none" stroke="#444" stroke-width="1.3"/><path d="M4 4.5 L12 12.5" stroke="#1E1E1E" stroke-width="1.6"/><path d="M3.5 4 L7.5 5 L4.5 8 Z M12.5 13 L8.5 12 L11.5 9Z" fill="#1E1E1E"/></svg>
<svg class="a" style="left:593px;top:109px;" width="16" height="16" viewBox="0 0 16 16"><path d="M1 15 H15 M1 15 L9 4" stroke="#1E1E1E" stroke-width="1.5" fill="none"/><path d="M7 6 A9 9 0 0 1 13 15" stroke="#1E1E1E" stroke-width="1.2" fill="none"/><path d="M13 15 L10.5 11 L15 11.5Z" fill="#1E1E1E"/></svg>
<svg class="a" style="left:622px;top:109px;" width="16" height="16" viewBox="0 0 16 16"><path d="M2 1 V16 M14 1 V16 M2 5 H14" stroke="#1E1E1E" stroke-width="1.5"/><path d="M5 2 L14 13 L11 3 Z" fill="#E8E020" stroke="#8A8010" stroke-width="0.8"/></svg>
<svg class="a" style="left:645px;top:109px;" width="16" height="16" viewBox="0 0 16 16"><path d="M2 1 V16 M2 4 H15 M2 13 H10 M10 7 V16" stroke="#1E1E1E" stroke-width="1.4"/><path d="M15 4 L12 2.5 V5.5Z M10 13 L7 11.5 V14.5Z" fill="#1E1E1E"/></svg>
<svg class="a" style="left:668px;top:109px;" width="16" height="16" viewBox="0 0 16 16"><path d="M2 1 V16 M8 1 V16 M14 1 V16 M1 5 H15" stroke="#1E1E1E" stroke-width="1.4"/></svg>
<svg class="a" style="left:691px;top:109px;" width="16" height="16" viewBox="0 0 16 16"><path d="M1 2 V6 M15 2 V6 M1 14 V16 M15 12 V16 M1 4 H15 M1 14 H15" stroke="#1E1E1E" stroke-width="1.3"/><rect x="9" y="6" width="5" height="7" fill="#E8B040" stroke="#8A6010"/><path d="M5 7 V12" stroke="#A04060" stroke-width="1.2"/></svg>
<svg class="a" style="left:714px;top:109px;" width="16" height="16" viewBox="0 0 16 16"><path d="M5 1 V14 M2 14 H8 M0 7 H3" stroke="#1E1E1E" stroke-width="1.5"/><path d="M5 15 L3 12 H7Z" fill="#1E1E1E"/><path d="M9 7 H14 M15 4 V10" stroke="#2C5A96" stroke-width="1.5"/><path d="M14 7 L11 5 V9Z" fill="#2C5A96"/></svg>
<svg class="a" style="left:742px;top:109px;" width="16" height="16" viewBox="0 0 16 16"><rect x="0.5" y="2.5" width="15" height="11" fill="#C8DCF2" stroke="#2C5A96"/><path d="M8 2.5 V13.5" stroke="#2C5A96"/><circle cx="4.3" cy="8" r="2.3" fill="none" stroke="#2C5A96"/><path d="M4.3 4.5 V11.5 M0.8 8 H7.8" stroke="#2C5A96" stroke-width="0.8"/><text x="9" y="12" font-size="8" font-family="Liberation Sans" fill="#222">.1</text></svg>
<svg class="a" style="left:766px;top:109px;" width="16" height="16" viewBox="0 0 16 16"><circle cx="8" cy="8.5" r="6.8" fill="#F4F2EA" stroke="#555" stroke-width="1.3"/><path d="M8 5.5 V11.5 M5 8.5 H11" stroke="#1E1E1E" stroke-width="1.8"/></svg>
<svg class="a" style="left:789px;top:109px;" width="16" height="16" viewBox="0 0 16 16"><path d="M1 2 V9 M15 2 V9 M1 5 H15" stroke="#1E1E1E" stroke-width="1.5"/><circle cx="9" cy="11" r="4.5" fill="#40B040"/><path d="M6.5 11 L8.5 13 L12 9" stroke="#fff" stroke-width="1.6" fill="none"/></svg>
<svg class="a" style="left:811px;top:109px;" width="16" height="16" viewBox="0 0 16 16"><path d="M1 5 V14 M1 9 H5 L8 4 L11 14 L15 8" stroke="#1E1E1E" stroke-width="1.5" fill="none"/></svg>
<svg class="a" style="left:840px;top:109px;" width="16" height="16" viewBox="0 0 16 16"><path d="M5 8 L8 1 L11 8 M6 5.5 H10" stroke="#2A4A88" stroke-width="2.2" fill="none"/><path d="M1 10 V16 M15 10 V16 M1 13 H15" stroke="#1E1E1E" stroke-width="1.5"/></svg>
<svg class="a" style="left:864px;top:109px;" width="16" height="16" viewBox="0 0 16 16"><path d="M1 10 V16 M15 10 V16 M1 13 H15" stroke="#1E1E1E" stroke-width="1.5"/><path d="M6 12 L13 2" stroke="#C8A020" stroke-width="2.5"/><path d="M13 2 L14 1" stroke="#A07050" stroke-width="2.5"/></svg>
<svg class="a" style="left:886px;top:109px;" width="16" height="16" viewBox="0 0 16 16"><path d="M1 7 V16 M11 6 V16 M1 12 H11 M5 2 V10 M15 1 V10 M5 5 H15" stroke="#1E1E1E" stroke-width="1.3"/><path d="M5 5 H15" stroke="#4A80C0" stroke-width="2"/></svg>
<svg class="a" style="left:41px;top:109px;" width="16" height="16" viewBox="0 0 16 16"><path d="M4 13 V10 C1 7,2 1,6 1 C10 1,11 7,8 10 V13 Z" fill="#FFFFD0" stroke="#B8B060" stroke-width="1.2"/><rect x="4.5" y="12" width="3" height="3" fill="#556"/></svg>
<svg class="a" style="left:56px;top:109px;" width="16" height="16" viewBox="0 0 16 16"><circle cx="8" cy="8" r="6.5" fill="#F0E040" stroke="#506040" stroke-width="1.6"/><path d="M1 1 L3 3 M15 1 L13 3 M1 15 L3 13 M15 15 L13 13" stroke="#90B050" stroke-width="1.2"/></svg>
<svg class="a" style="left:72px;top:109px;" width="16" height="16" viewBox="0 0 16 16"><circle cx="6.5" cy="6.5" r="5.5" fill="#A8C0D8" stroke="#7A98B8"/><circle cx="6.5" cy="6.5" r="2" fill="#D0DCE8"/><path d="M8.5 8.5 H14.5 V15.5 H6.5 V10" fill="#fff" stroke="#333"/></svg>
<svg class="a" style="left:90px;top:109px;" width="16" height="16" viewBox="0 0 16 16"><path d="M2 8 V4.5 C2 1,8 1,8 4.5 V7" stroke="#C8C020" stroke-width="2.2" fill="none"/><rect x="6" y="7" width="8" height="8" fill="#F0E830" stroke="#A09010"/></svg>
<svg class="a" style="left:104px;top:109px;" width="16" height="16" viewBox="0 0 16 16"><rect x="2.5" y="3.5" width="10" height="10" fill="#fff" stroke="#000" stroke-width="1.3"/></svg>
<div class="a" style="left:518px;top:106px;width:2px;height:22px;border-left:1px solid #ACA899;border-right:1px solid #fff"></div>
<div class="a" style="left:615px;top:106px;width:2px;height:22px;border-left:1px solid #ACA899;border-right:1px solid #fff"></div>
<div class="a" style="left:738px;top:106px;width:2px;height:22px;border-left:1px solid #ACA899;border-right:1px solid #fff"></div>
<div class="a" style="left:834px;top:106px;width:2px;height:22px;border-left:1px solid #ACA899;border-right:1px solid #fff"></div>
<div class="a" style="left:408px;top:103px;width:2px;height:27px;border-left:1px solid #ACA899;border-right:1px solid #fff"></div>

<!-- drawing -->

<div class="a" style="left:0px;top:129px;width:25px;height:436px;background:#ECE9D8;border-left:1px solid #fff;border-top:1px solid #fff;border-right:1px solid #ACA899;border-bottom:1px solid #ACA899"></div>
<div class="a" style="left:3px;top:132px;width:19px;height:3px;border-top:1px solid #fff;border-bottom:1px solid #ACA899"></div>
<div class="a" style="left:3px;top:136px;width:19px;height:3px;border-top:1px solid #fff;border-bottom:1px solid #ACA899"></div>
<div class="a" style="left:25px;top:129px;width:25px;height:217px;background:#ECE9D8;border-left:1px solid #fff;border-top:1px solid #fff;border-right:1px solid #ACA899;border-bottom:1px solid #ACA899"></div>
<div class="a" style="left:28px;top:132px;width:19px;height:3px;border-top:1px solid #fff;border-bottom:1px solid #ACA899"></div>
<div class="a" style="left:28px;top:136px;width:19px;height:3px;border-top:1px solid #fff;border-bottom:1px solid #ACA899"></div>
<div class="a" style="left:974px;top:129px;width:23px;height:106px;background:#ECE9D8;border-left:1px solid #fff;border-top:1px solid #fff;border-right:1px solid #ACA899;border-bottom:1px solid #ACA899"></div>
<div class="a" style="left:977px;top:132px;width:17px;height:3px;border-top:1px solid #fff;border-bottom:1px solid #ACA899"></div>
<div class="a" style="left:977px;top:136px;width:17px;height:3px;border-top:1px solid #fff;border-bottom:1px solid #ACA899"></div>
<div class="a" style="left:998px;top:129px;width:26px;height:392px;background:#ECE9D8;border-left:1px solid #fff;border-top:1px solid #fff;border-right:1px solid #ACA899;border-bottom:1px solid #ACA899"></div>
<div class="a" style="left:1001px;top:132px;width:20px;height:3px;border-top:1px solid #fff;border-bottom:1px solid #ACA899"></div>
<div class="a" style="left:1001px;top:136px;width:20px;height:3px;border-top:1px solid #fff;border-bottom:1px solid #ACA899"></div>
<svg class="a" style="left:4px;top:144px;" width="16" height="16" viewBox="0 0 16 16"><path d="M3 14 L13 4" stroke="#1E1E1E" stroke-width="1.6"/><rect x="1" y="12" width="3.5" height="3.5" fill="#2C5A96"/><rect x="12" y="2" width="3.5" height="3.5" fill="#2C5A96"/></svg>
<svg class="a" style="left:4px;top:166px;" width="16" height="16" viewBox="0 0 16 16"><path d="M1 15 L15 1" stroke="#1E1E1E" stroke-width="1.6"/><path d="M0 16 L1 11 L5 15Z M16 0 L15 5 L11 1Z" fill="#1E1E1E"/><rect x="4.5" y="9" width="3" height="3" fill="#2C5A96"/><rect x="8.5" y="5" width="3" height="3" fill="#2C5A96"/></svg>
<svg class="a" style="left:4px;top:188px;" width="16" height="16" viewBox="0 0 16 16"><path d="M3 12 H11 M3 7.5 H11 Q15 7.5 15 9.5 Q15 12 11 12" stroke="#2C5A96" stroke-width="1.3" fill="none"/><path d="M0 12 H3" stroke="#F0A030" stroke-width="1.3"/><rect x="1.5" y="10.5" width="3" height="3" fill="#2C5A96"/><rect x="9.5" y="10.5" width="3" height="3" fill="#2C5A96"/><rect x="9.5" y="6" width="3" height="3" fill="#2C5A96"/></svg>
<svg class="a" style="left:4px;top:210px;" width="16" height="16" viewBox="0 0 16 16"><path d="M8 1.5 L14.5 6.5 L12 14.5 H4 L1.5 6.5 Z" fill="#DDE6F4" stroke="#1E1E1E" stroke-width="1.4"/></svg>
<svg class="a" style="left:4px;top:232px;" width="16" height="16" viewBox="0 0 16 16"><path d="M2.5 5.5 H13.5 V12.5 H2.5 Z" fill="#E4ECF6" stroke="#1E1E1E" stroke-width="1.4"/><rect x="1" y="11" width="3" height="3" fill="#2C5A96"/><rect x="12" y="4" width="3" height="3" fill="#2C5A96"/></svg>
<svg class="a" style="left:4px;top:254px;" width="16" height="16" viewBox="0 0 16 16"><path d="M2 15 Q3 5 14 3" stroke="#1E1E1E" stroke-width="1.5" fill="none"/><rect x="1" y="13" width="3" height="3" fill="#2C5A96"/><rect x="4.5" y="6" width="3" height="3" fill="#2C5A96"/><rect x="12.5" y="1.5" width="3" height="3" fill="#2C5A96"/></svg>
<svg class="a" style="left:4px;top:276px;" width="16" height="16" viewBox="0 0 16 16"><circle cx="8" cy="8" r="6.8" fill="#E4ECF6" stroke="#1E1E1E" stroke-width="1.5"/><path d="M8 8 L12 4" stroke="#2C5A96" stroke-width="1.3"/><rect x="6.5" y="6.5" width="3" height="3" fill="#2C5A96"/></svg>
<svg class="a" style="left:4px;top:298px;" width="16" height="16" viewBox="0 0 16 16"><path d="M4 3 Q7 0 9 3 Q13 2 13 6 Q16 9 13 11 Q13 15 9 13 Q6 16 4 13 Q0 12 2 9 Q0 5 4 3Z" fill="#E4ECF6" stroke="#1E1E1E" stroke-width="1.4"/></svg>
<svg class="a" style="left:4px;top:320px;" width="16" height="16" viewBox="0 0 16 16"><path d="M1 14 C4 4,7 14,9 8 S13 3,15 2" stroke="#1E1E1E" stroke-width="1.4" fill="none"/></svg>
<svg class="a" style="left:4px;top:342px;" width="16" height="16" viewBox="0 0 16 16"><ellipse cx="8" cy="8" rx="6.5" ry="4.5" fill="#E4ECF6" stroke="#1E1E1E" stroke-width="1.5"/><rect x="6.5" y="2" width="3" height="3" fill="#2C5A96"/><rect x="6.5" y="11" width="3" height="3" fill="#2C5A96"/><rect x="0" y="6.5" width="3" height="3" fill="#2C5A96"/><rect x="13" y="6.5" width="3" height="3" fill="#2C5A96"/></svg>
<svg class="a" style="left:4px;top:364px;" width="16" height="16" viewBox="0 0 16 16"><path d="M2 7 Q5 2 10 3 Q16 5 14 10 Q12 13 8 13" stroke="#1E1E1E" stroke-width="1.5" fill="none"/><rect x="1" y="6" width="3" height="3" fill="#2C5A96"/><rect x="7" y="11.5" width="3" height="3" fill="#2C5A96"/></svg>
<svg class="a" style="left:4px;top:386px;" width="16" height="16" viewBox="0 0 16 16"><path d="M6 1 H13 L15 3 V12 H6 Z" fill="#E8ECF2" stroke="#556"/><rect x="1" y="6" width="8" height="6" fill="#E8E050" stroke="#2C5A96"/><circle cx="10" cy="12" r="3.5" fill="#B8D0A0" stroke="#333"/><path d="M13 13 L16 16 V13Z" fill="#000"/></svg>
<svg class="a" style="left:4px;top:408px;" width="16" height="16" viewBox="0 0 16 16"><rect x="2" y="2" width="8" height="6" fill="#E8E050" stroke="#2C5A96"/><circle cx="10" cy="10" r="4" fill="#D8E0C8" stroke="#333" stroke-width="1.3"/><rect x="1" y="7" width="3" height="3" fill="#2C5A96"/></svg>
<svg class="a" style="left:4px;top:430px;" width="16" height="16" viewBox="0 0 16 16"><rect x="6.5" y="6.5" width="3" height="3" fill="#2A4A80"/></svg>
<svg class="a" style="left:4px;top:452px;" width="16" height="16" viewBox="0 0 16 16"><rect x="3" y="3" width="10" height="10" fill="#fff" stroke="#2C5A96" stroke-width="1.2"/><path d="M3 6 L6 3 M3 9 L9 3 M3 12 L12 3 M5 13 L13 5 M8 13 L13 8" stroke="#7A8AA0"/><path d="M0 4 H16 M0 12 H16 M4 0 V16 M12 0 V16" stroke="#2C5A96" stroke-width="1.2"/></svg>
<svg class="a" style="left:4px;top:474px;" width="16" height="16" viewBox="0 0 16 16"><rect x="3" y="3" width="10" height="10" fill="#5A6A58" stroke="#222" stroke-width="1.2"/><rect x="6" y="5" width="6" height="6" fill="#8A9888"/><path d="M0 4 H16 M0 12 H16 M4 0 V16 M12 0 V16" stroke="#1A2A50" stroke-width="1.4"/></svg>
<svg class="a" style="left:4px;top:496px;" width="16" height="16" viewBox="0 0 16 16"><path d="M1.5 2.5 H10 L15 8 V14.5 H1.5 Z" fill="#D8E6F6" stroke="#2C5A96" stroke-width="1.3"/><circle cx="7" cy="8.5" r="2.7" fill="#fff" stroke="#556" stroke-width="1.2"/></svg>
<svg class="a" style="left:4px;top:518px;" width="16" height="16" viewBox="0 0 16 16"><rect x="1.5" y="2.5" width="13" height="11" fill="#E0E8F8" stroke="#5A6AA8"/><rect x="1.5" y="2.5" width="13" height="2.5" fill="#6A7AC0"/><path d="M1.5 8 H14.5 M1.5 11 H14.5 M5.5 5 V13.5 M10 5 V13.5" stroke="#6A7AC0"/></svg>
<svg class="a" style="left:4px;top:540px;" width="16" height="16" viewBox="0 0 16 16"><path d="M2 15 L8 1 L14 15 M4.5 10 H11.5" stroke="#1E1E1E" stroke-width="1.9" fill="none"/></svg>
<svg class="a" style="left:30px;top:144px;" width="16" height="16" viewBox="0 0 16 16"><path d="M2 15 L8 1 L14 15 M4.5 10 H11.5" stroke="#1E1E1E" stroke-width="1.9" fill="none"/></svg>
<svg class="a" style="left:30px;top:166px;" width="16" height="16" viewBox="0 0 16 16"><path d="M0.5 15 L5.5 2 L10.5 15 M2.5 10 H8.5" stroke="#1E1E1E" stroke-width="1.8" fill="none"/><path d="M13 2 V15 M11 2 H15 M11 15 H15" stroke="#445" stroke-width="1.2"/></svg>
<svg class="a" style="left:30px;top:188px;" width="16" height="16" viewBox="0 0 16 16"><path d="M1 15 L6 1 L11 15 M3 10 H9" stroke="#1E1E1E" stroke-width="1.8" fill="none"/><path d="M6 15 L14 3" stroke="#C8B020" stroke-width="2.5"/><path d="M14 3 L15 1" stroke="#888" stroke-width="2"/></svg>
<svg class="a" style="left:30px;top:210px;" width="16" height="16" viewBox="0 0 16 16"><circle cx="7" cy="7" r="5.5" fill="#E0ECF8" stroke="#556" stroke-width="1.2"/><text x="2.5" y="10" font-size="7.5" font-family="Liberation Sans" fill="#1F3F8F">ab</text><text x="13" y="10" font-size="6" font-family="Liberation Sans" fill="#000">c</text><path d="M10.5 10.5 L14 14.5" stroke="#A07040" stroke-width="2"/></svg>
<svg class="a" style="left:30px;top:232px;" width="16" height="16" viewBox="0 0 16 16"><text x="0" y="8" font-size="7" font-weight="bold" font-family="Liberation Sans" fill="#223">ABC</text><path d="M4 11 L7 14 L14 7" stroke="#4A80C0" stroke-width="2.2" fill="none"/></svg>
<svg class="a" style="left:30px;top:254px;" width="16" height="16" viewBox="0 0 16 16"><path d="M1 13 L6 1 L11 13 M3 9 H9" stroke="#1E1E1E" stroke-width="1.8" fill="none"/><path d="M6 16 L15 8" stroke="#5A4030" stroke-width="2.2"/><path d="M13 9 L16 6" stroke="#C08040" stroke-width="2"/></svg>
<svg class="a" style="left:30px;top:276px;" width="16" height="16" viewBox="0 0 16 16"><rect x="1.5" y="1.5" width="13" height="13" fill="#E4ECF8" stroke="#8AA0C0"/><path d="M2 2 H10 V14 H2 Z" fill="none" stroke="#000" stroke-dasharray="1 1"/><path d="M3.5 12 L6 5 L8.5 12 M4.5 9.5 H7.5" stroke="#1E1E1E" stroke-width="1.2" fill="none"/></svg>
<svg class="a" style="left:30px;top:298px;" width="16" height="16" viewBox="0 0 16 16"><rect x="2.5" y="1.5" width="12" height="13" fill="#E4ECF8" stroke="#8AA0C0"/><path d="M4 13 L8.5 2.5 L13 13 M5.8 9.5 H11.2" stroke="#1E1E1E" stroke-width="1.8" fill="none"/><path d="M2 1 V15 M14.5 7 V10" stroke="#223" stroke-width="1.2"/><rect x="0.5" y="12.5" width="3" height="3" fill="#2C5A96"/></svg>
<svg class="a" style="left:30px;top:320px;" width="16" height="16" viewBox="0 0 16 16"><rect x="1" y="1" width="14" height="3" fill="#F0C030" stroke="#A08010" stroke-width="0.8"/><path d="M3 4 V15 H9" stroke="#2C5A96" stroke-width="1.5" fill="none"/><path d="M6 7 V11 H9" stroke="#222" stroke-width="1.2" fill="none"/><path d="M10 15 L15 7" stroke="#1A1A1A" stroke-width="2"/><path d="M15 6 L13 9 L16 9Z" fill="#000"/></svg>
<svg class="a" style="left:977px;top:144px;" width="16" height="16" viewBox="0 0 16 16"><rect x="1.5" y="1.5" width="8" height="8" fill="#C8DCF4" stroke="#3A6AAA"/><rect x="9.5" y="9.5" width="5" height="5" fill="#C8DCF4" stroke="#3A6AAA"/><rect x="4.5" y="4.5" width="8" height="8" fill="#4A7AC0" stroke="#2A4A80"/></svg>
<svg class="a" style="left:977px;top:166px;" width="16" height="16" viewBox="0 0 16 16"><rect x="1.5" y="1.5" width="6" height="6" fill="#C8DCF4" stroke="#3A6AAA"/><rect x="4.5" y="4.5" width="7" height="7" fill="#4A7AC0" stroke="#2A4A80"/><rect x="8.5" y="8.5" width="6" height="6" fill="#D8E8F8" stroke="#3A6AAA"/></svg>
<svg class="a" style="left:977px;top:188px;" width="16" height="16" viewBox="0 0 16 16"><rect x="5.5" y="5.5" width="9" height="9" fill="#C8DCF4" stroke="#3A6AAA"/><rect x="1.5" y="1.5" width="9" height="9" fill="#4A7AC0" stroke="#2A5A9A"/></svg>
<svg class="a" style="left:977px;top:210px;" width="16" height="16" viewBox="0 0 16 16"><rect x="1.5" y="1.5" width="9" height="9" fill="#4A7AC0" stroke="#2A5A9A"/><rect x="5.5" y="5.5" width="9" height="9" fill="#D8E8F8" stroke="#7A98C0"/></svg>
<svg class="a" style="left:1003px;top:144px;" width="16" height="16" viewBox="0 0 16 16"><path d="M1 15 H15" stroke="#222"/><path d="M5 13 L13 3 L16 6 L8 15Z" fill="#F0D050" stroke="#8A7010" stroke-width="0.8"/><path d="M3 11 L6 8 L9 11 L6 14Z" fill="#E06060" stroke="#8A2020" stroke-width="0.8"/></svg>
<svg class="a" style="left:1003px;top:166px;" width="16" height="16" viewBox="0 0 16 16"><circle cx="4.5" cy="4.5" r="3.2" fill="#fff" stroke="#223" stroke-width="1.4"/><circle cx="8.5" cy="12" r="3.2" fill="#E4ECF6" stroke="#223" stroke-width="1.4"/><circle cx="12.5" cy="12" r="3.2" fill="#E4ECF6" stroke="#223" stroke-width="1.4"/><path d="M8 2 Q14 2 14 7" stroke="#223" stroke-width="1.5" fill="none"/><path d="M12 6 H16 L14 9Z" fill="#223"/></svg>
<svg class="a" style="left:1003px;top:188px;" width="16" height="16" viewBox="0 0 16 16"><path d="M1.5 14.5 L6.5 2 V14.5 Z M14.5 14.5 L9.5 2 V14.5 Z" fill="#fff" stroke="#1E1E1E" stroke-width="1.4"/><path d="M8 0 V16" stroke="#2C5A96" stroke-width="1.2"/></svg>
<svg class="a" style="left:1003px;top:210px;" width="16" height="16" viewBox="0 0 16 16"><path d="M16 15 H4 Q1 15 1 12 Q1 9 4 9 H6 V5 Q6 1.5 9.5 1.5 Q13 1.5 13 5 V9 H16" stroke="#1E1E1E" stroke-width="1.6" fill="#fff"/><path d="M16 12 H4.5 Q3.5 12 3.5 11.8 Q3.5 11.5 4.5 11.5 H8.5 V5.5 Q8.5 4 9.5 4 Q10.5 4 10.5 5.5 V11.5 H16" stroke="#3A80C8" stroke-width="1.3" fill="none"/></svg>
<svg class="a" style="left:1003px;top:232px;" width="16" height="16" viewBox="0 0 16 16"><rect x="1.5" y="1.5" width="5" height="5" fill="#fff" stroke="#1E1E1E" stroke-width="1.4"/><rect x="9.5" y="1.5" width="5" height="5" fill="#fff" stroke="#1E1E1E" stroke-width="1.4"/><rect x="1.5" y="9.5" width="5" height="5" fill="#fff" stroke="#1E1E1E" stroke-width="1.4"/><rect x="9.5" y="9.5" width="5" height="5" fill="#fff" stroke="#1E1E1E" stroke-width="1.4"/></svg>
<svg class="a" style="left:1003px;top:254px;" width="16" height="16" viewBox="0 0 16 16"><path d="M8 1 L11 4 H9 V7 H12 V5 L15 8 L12 11 V9 H9 V12 H11 L8 15 L5 12 H7 V9 H4 V11 L1 8 L4 5 V7 H7 V4 H5 Z" fill="#3A6AAA" stroke="#2A4A80" stroke-width="0.6"/></svg>
<svg class="a" style="left:1003px;top:276px;" width="16" height="16" viewBox="0 0 16 16"><path d="M4 4 A6 6 0 1 0 10 2.5" stroke="#3A5A80" stroke-width="2.5" fill="none"/><path d="M1 1 L7 1 L4 6Z" fill="#3A5A80"/></svg>
<svg class="a" style="left:1003px;top:298px;" width="16" height="16" viewBox="0 0 16 16"><rect x="5.5" y="1.5" width="9" height="13" fill="#D8E6F6" stroke="#445" stroke-width="1.2"/><path d="M1.5 7.5 H9.5 V14.5 H1.5 Z" fill="#fff" stroke="#000" stroke-dasharray="1.2 1.2"/></svg>
<svg class="a" style="left:1003px;top:320px;" width="16" height="16" viewBox="0 0 16 16"><path d="M1.5 2.5 H7 L14.5 14.5 H1.5 Z" fill="#D8E6F6" stroke="#223" stroke-width="1.4"/><path d="M5 3 V14" stroke="#000" stroke-dasharray="1 1"/></svg>
<svg class="a" style="left:1003px;top:342px;" width="16" height="16" viewBox="0 0 16 16"><path d="M0 8 H3 M8 8 H16" stroke="#222" stroke-width="1.3" stroke-dasharray="2 1"/><path d="M0 8 H4" stroke="#222" stroke-width="1.5"/><path d="M4 14 L10 2" stroke="#2C5A96" stroke-width="1.5"/></svg>
<svg class="a" style="left:1003px;top:364px;" width="16" height="16" viewBox="0 0 16 16"><path d="M0 8 H5" stroke="#222" stroke-width="1.5"/><path d="M6 8 H11" stroke="#222" stroke-width="1.3" stroke-dasharray="2 1"/><path d="M10 14 L15 2" stroke="#2C5A96" stroke-width="1.5"/></svg>
<svg class="a" style="left:1003px;top:386px;" width="16" height="16" viewBox="0 0 16 16"><path d="M1.5 4.5 H14.5 V14.5 H1.5 Z" fill="#DDE8F6" stroke="#222" stroke-width="1.4"/><rect x="6" y="2" width="4" height="4" rx="1" fill="#2A4A80"/></svg>
<svg class="a" style="left:1003px;top:408px;" width="16" height="16" viewBox="0 0 16 16"><path d="M3 3.5 H1.5 V14.5 H14.5 V3.5 H13" fill="#DDE8F6" stroke="#222" stroke-width="1.4"/><rect x="2" y="2" width="3" height="3" fill="#2A4A80"/><rect x="11" y="2" width="3" height="3" fill="#2A4A80"/></svg>
<svg class="a" style="left:1003px;top:430px;" width="16" height="16" viewBox="0 0 16 16"><path d="M0 8 H16" stroke="#2A4A80" stroke-width="1.6"/><path d="M2 4 L7 8 L2 12Z M14 4 L9 8 L14 12Z" fill="#2A4A80"/></svg>
<svg class="a" style="left:1003px;top:452px;" width="16" height="16" viewBox="0 0 16 16"><path d="M2 15 V6 L7 1 H15" stroke="#111" stroke-width="1.4" fill="none"/><path d="M2 6 L7 1" stroke="#3A80C8" stroke-width="2"/><path d="M2 1 H7 M2 1 V6" stroke="#000" stroke-dasharray="1 1"/></svg>
<svg class="a" style="left:1003px;top:474px;" width="16" height="16" viewBox="0 0 16 16"><path d="M2 15 V8 Q2 1 9 1 H15" stroke="#111" stroke-width="1.4" fill="none"/><path d="M2 8 Q2 1 9 1" stroke="#3A80C8" stroke-width="2" fill="none"/><path d="M2 1 H8" stroke="#000" stroke-dasharray="1 1"/></svg>
<svg class="a" style="left:1003px;top:496px;" width="16" height="16" viewBox="0 0 16 16"><path d="M2 12 L10 5" stroke="#C02020" stroke-width="3"/><circle cx="5" cy="10" r="4" fill="#E84020"/><circle cx="5" cy="10" r="2" fill="#F0C020"/><path d="M11 4 L15 1 M12 6 L16 6 M10 2 L10 0" stroke="#5A80C0" stroke-width="1.2"/></svg>
<div class="a" style="left:51px;top:130px;width:922px;height:2px;background:#ECE9D8;border-top:1px solid #ACA899"></div>
<div class="a" style="left:51px;top:130px;width:3px;height:520px;background:#F2F0E6;border-right:1px solid #8E8C7C"></div>
<div class="a" style="left:54px;top:132px;width:916px;height:500px;background:#000"></div>
<div class="a" style="left:288px;top:132px;width:619px;height:500px;background:#fff;border-left:1px solid #3BD23B;border-right:1px solid #3BD23B"></div>
<svg class="a" style="left:288px;top:132px" width="619" height="500" viewBox="288 132 619 500"><path d="M457 168 V222" stroke="#CACACA" stroke-width="1" fill="none"/><path d="M370 228 H425" stroke="#CACACA" stroke-width="1" fill="none"/><path d="M455.6 350 V391" stroke="#CACACA" stroke-width="1" fill="none"/><path d="M742.6 355 V392" stroke="#CACACA" stroke-width="1" fill="none"/><path d="M547 186 V212" stroke="#CACACA" stroke-width="1" fill="none"/><path d="M648 191 V208" stroke="#CACACA" stroke-width="1" fill="none"/><path d="M727 205 V216" stroke="#CACACA" stroke-width="1" fill="none"/><path d="M832 144.5 H852" stroke="#CACACA" stroke-width="1" fill="none"/><path d="M583.5 446 V496" stroke="#CACACA" stroke-width="1" fill="none"/><path d="M411 372 V440" stroke="#CACACA" stroke-width="1" fill="none"/><path d="M537 372 V440" stroke="#CACACA" stroke-width="1" fill="none"/><path d="M637 372 V430" stroke="#CACACA" stroke-width="1" fill="none"/><path d="M717 372 V425" stroke="#CACACA" stroke-width="1" fill="none"/><path d="M796 360 V420" stroke="#CACACA" stroke-width="1" fill="none"/><path d="M820 511.5 H857 M809 553.5 H857 M827 258.5 H862" stroke="#505050" stroke-width="1" fill="none"/><path d="M418 328 L638 324 V338 M644 317 L812 323 V350 L797 351" stroke="#3A3A3A" stroke-width="1.3" fill="none"/><path d="M642 351 L687 352 L687 360 L642 362 Z M719 354 H732 V358 H719 Z" stroke="#3A3A3A" stroke-width="1.1" fill="none"/><rect x="633.5" y="337.5" width="17" height="10" stroke="#3A3A3A" stroke-width="1.2" fill="none"/><path d="M426 197.5 L487 206 L487 209.5 L428 201.5 Z" fill="#505050"/><path d="M428 202 L486 210 L485 213 L430 205 Z" fill="#B0B0B0"/><path d="M486 208 L489 206" stroke="#555"/><path d="M424 200 L428 202 L428 252 L424 254 Z" fill="#505050"/><path d="M484 210 L482.8 211 L481 217.8 L475 221.6 L471.4 226.3 L467.6 235 L462 240.6 L454 242 L444.9 244.4 L439 248 L432 250 L426 253" stroke="#606060" stroke-width="1.1" fill="none"/><path d="M817 149 C810 170,803.5 200,804 235 C805 275,810 305,813 330 L815.2 346 L826 395.5 H838.5 L837.4 386.3 L829.3 375.5" stroke="#5A5A5A" stroke-width="1.4" fill="none"/><path d="M831.3 149 C838 170,845 200,847 235 C848 270,845 300,841.2 330 L832.5 376.6" stroke="#5A5A5A" stroke-width="1.4" fill="none"/><path d="M817 149.5 Q817 139.5 824 139.5 Q831.3 139.5 831.3 149.5 Z" fill="#6A6A6A"/><path d="M820 148 Q824 143 828 148" stroke="#bbb" fill="none"/><path d="M492.5 251 L667.6 262.7 M557.5 348 L569.7 329 M545 346 L555 357" stroke="#26DE26" stroke-width="1.2" fill="none"/><path d="M423 196 C432.0 195,438 219.4,438 248 C438 290.4,425.0 338.8,418 369 L417 370 L414 252 C414 221.2,417.6 195,423 196 Z" stroke="#26DE26" stroke-width="1.5" fill="none"/><path d="M423 200 C429.8 202,435 227.2,435 252 C435 290.4,422.0 338.8,418 365" stroke="#26DE26" stroke-width="0.9" fill="none" opacity="0.9"/><path d="M547 211 C554.4 210,559.3 224.9,559.3 242 C559.3 279.1,547.9 321.5,541.7 348 L536 376 L538.4 270 C538.4 237.6,541.8 210,547 211 Z" stroke="#26DE26" stroke-width="1.5" fill="none"/><path d="M547 215 C552.5 217,556.3 229.6,556.3 246 C556.3 279.1,545.2 321.5,541.7 344" stroke="#26DE26" stroke-width="0.9" fill="none" opacity="0.9"/><path d="M648 214 C655.7 213,660.8 229.2,660.8 247.8 C660.8 285.7,647.9 328.9,641 356 L640 364 L641 252 C641 231.1,643.8 213,648 214 Z" stroke="#26DE26" stroke-width="1.5" fill="none"/><path d="M648 218 C653.8 220,657.8 234.3,657.8 251.8 C657.8 285.7,645.0 328.9,641 352" stroke="#26DE26" stroke-width="0.9" fill="none" opacity="0.9"/><path d="M727 224.5 C733.6 223.5,738 237.3,738 253 C738 286.9,726.3 325.8,720 350 L718 360 L719 262 C719 241.4,722.2 223.5,727 224.5 Z" stroke="#26DE26" stroke-width="1.5" fill="none"/><path d="M727 228.5 C732.0 230.5,735 241.6,735 257 C735 286.9,723.6 325.8,720 346" stroke="#26DE26" stroke-width="0.9" fill="none" opacity="0.9"/><path d="M804.4 236.2 C809.9 235.2,813.5 249.5,813.5 265.7 C813.5 295.9,803.4 330.4,798 352 L795.2 363 L797.3 300 C797.3 264.9,800.1 235.2,804.4 236.2 Z" stroke="#26DE26" stroke-width="1.5" fill="none"/><path d="M804.4 240.2 C808.5 242.2,810.5 253.9,810.5 269.7 C810.5 295.9,801.1 330.4,798 348" stroke="#26DE26" stroke-width="0.9" fill="none" opacity="0.9"/><path d="M877.2 249.4 C882.3 248.4,885.7 259.4,885.7 271.7 C885.7 299.1,876.1 330.4,871 350 L869.4 365 L869.4 270 C869.4 258.7,872.5 248.4,877.2 249.4 Z" stroke="#26DE26" stroke-width="1.5" fill="none"/><path d="M877.2 253.4 C881.0 255.4,882.7 262.8,882.7 275.7 C882.7 299.1,873.9 330.4,871 346" stroke="#26DE26" stroke-width="0.9" fill="none" opacity="0.9"/><path d="M650 207 V215 M727 215 V225 M877 233 V250" stroke="#26DE26" stroke-width="1.2"/><path d="M870 285 H884" stroke="#26DE26" stroke-width="3"/><rect x="640" y="338" width="8" height="7" fill="#26DE26"/><path d="M870.5 251 L877.2 244.5 L884 251 L877.2 257.5 Z M873 248.5 L880 255 M875 246.5 L882 253 M873 253.5 L880 246.5" fill="none" stroke="#26DE26" stroke-width="1.3"/><text x="667.5" y="329.5" font-size="7" font-family="Liberation Sans" fill="#26DE26" textLength="8" lengthAdjust="spacingAndGlyphs">330</text><circle cx="555" cy="358" r="3" stroke="#C84A14" stroke-width="1.3" fill="#9AD05A"/><circle cx="877.5" cy="298.5" r="3" stroke="#C84A14" stroke-width="1.3" fill="#9AD05A"/><path d="M423.4 196.3 L798.6 240.7 L797.6 351.3 L416.6 369.7 Z M547 212 L537 367 M647.2 222 L639 358.9 M724.5 231.5 L718.5 354.8" stroke="#1C1C94" stroke-width="1.7" fill="none" stroke-linejoin="miter"/><path d="M368 247.5 H417 M393.5 223 V272" stroke="#000" stroke-width="1"/><rect x="390.5" y="244.5" width="6" height="6" fill="none" stroke="#000" stroke-width="1"/><path d="M424.5 453 L802 496 C814 498,822 508,823 530 C822 560,812 590,801 605.6 L731 611 M718 612 L685 612 M639.5 615.7 L417.5 626 L424.5 453" stroke="#3A3A3A" stroke-width="1.4" fill="none"/><path d="M419.8 583.2 L639.5 579 V615.7 M645 568 L802 576 L812 577.6 M645 568 V617 M802 496 V576 M812 505 V516 H820.6 M620 597 H631 M620 597 V632" stroke="#3A3A3A" stroke-width="1.2" fill="none"/><path d="M645 607 H685 V617 H645 Z M718 608 H731 V613 H718 Z" stroke="#3A3A3A" stroke-width="1.1" fill="none"/><rect x="631.5" y="592" width="19" height="8.5" stroke="#222" stroke-width="1.4" fill="#ddd"/><rect x="636" y="594" width="9" height="5" fill="#333"/><text x="307" y="271" font-size="11.5" textLength="56.0" font-family="Liberation Sans" font-style="italic" fill="#5A5A5A" lengthAdjust="spacingAndGlyphs">Vista por</text><text x="309.5" y="290.8" font-size="12.9" textLength="38.1" font-family="Liberation Sans" font-style="italic" fill="#5A5A5A" lengthAdjust="spacingAndGlyphs">arriba</text><text x="305.3" y="310.7" font-size="13.0" textLength="50.7" font-family="Liberation Sans" font-style="italic" fill="#5A5A5A" lengthAdjust="spacingAndGlyphs">(con tip)</text><text x="310" y="528.6" font-size="14.7" textLength="54.7" font-family="Liberation Sans" font-style="italic" fill="#5A5A5A" lengthAdjust="spacingAndGlyphs">Vista por</text><text x="316.4" y="548.4" font-size="12.4" textLength="35.4" font-family="Liberation Sans" font-style="italic" fill="#5A5A5A" lengthAdjust="spacingAndGlyphs">arriba</text><text x="635" y="632" font-size="11.7" textLength="135.0" font-family="Liberation Sans" font-style="italic" fill="#5A5A5A" lengthAdjust="spacingAndGlyphs">Pinza  de inmovilización</text><text x="455" y="164" font-size="12.2" textLength="6.0" font-family="Liberation Sans" font-style="italic" fill="#5A5A5A" lengthAdjust="spacingAndGlyphs">6</text><text x="360" y="232" font-size="12.2" textLength="8.0" font-family="Liberation Sans" font-style="italic" fill="#5A5A5A" lengthAdjust="spacingAndGlyphs">11</text><text x="862" y="262" font-size="10.8" textLength="6.0" font-family="Liberation Sans" font-style="italic" fill="#5A5A5A" lengthAdjust="spacingAndGlyphs">4</text><text x="852.5" y="148" font-size="12.2" textLength="12.2" font-family="Liberation Sans" font-style="italic" fill="#5A5A5A" lengthAdjust="spacingAndGlyphs">13</text><text x="856.7" y="517" font-size="14.1" textLength="11.6" font-family="Liberation Sans" font-style="italic" fill="#5A5A5A" lengthAdjust="spacingAndGlyphs">13</text><text x="857.8" y="555.5" font-size="10.9" textLength="7.0" font-family="Liberation Sans" font-style="italic" fill="#5A5A5A" lengthAdjust="spacingAndGlyphs">5</text><text x="581.7" y="443" font-size="11.6" textLength="4.3" font-family="Liberation Sans" font-style="italic" fill="#5A5A5A" lengthAdjust="spacingAndGlyphs">1</text><text x="452" y="406" font-size="12.2" textLength="6.3" font-family="Liberation Sans" font-style="italic" fill="#5A5A5A" lengthAdjust="spacingAndGlyphs">3</text><text x="740" y="405.7" font-size="14.5" textLength="7.4" font-family="Liberation Sans" font-style="italic" fill="#5A5A5A" lengthAdjust="spacingAndGlyphs">2</text><text x="0" y="0" font-size="14.6" textLength="51.7" font-family="Liberation Sans" font-style="italic" fill="#5A5A5A" lengthAdjust="spacingAndGlyphs" transform="translate(408.3 435.7) rotate(-90)">Costilla 1</text><text x="0" y="0" font-size="13.1" textLength="52.8" font-family="Liberation Sans" font-style="italic" fill="#5A5A5A" lengthAdjust="spacingAndGlyphs" transform="translate(536 430.8) rotate(-90)">Costilla 2</text><text x="0" y="0" font-size="15.8" textLength="54.6" font-family="Liberation Sans" font-style="italic" fill="#5A5A5A" lengthAdjust="spacingAndGlyphs" transform="translate(636 426.4) rotate(-90)">Costilla 3</text><text x="0" y="0" font-size="16.9" textLength="49.8" font-family="Liberation Sans" font-style="italic" fill="#5A5A5A" lengthAdjust="spacingAndGlyphs" transform="translate(717 422.5) rotate(-90)">Costilla 4</text><text x="0" y="0" font-size="14.7" textLength="52.7" font-family="Liberation Sans" font-style="italic" fill="#5A5A5A" lengthAdjust="spacingAndGlyphs" transform="translate(793.4 419.6) rotate(-90)">Costilla 5</text></svg>
<svg class="a" style="left:54px;top:530px;" width="110" height="100" viewBox="0 0 110 100"><g transform="translate(-54 -530)" stroke="#fff" stroke-width="1" fill="none"><rect x="63.5" y="612.5" width="10" height="9.5"/><path d="M68.5 612.5 V568.6 M63.5 568.6 H73 L68.3 557 Z M66.5 566 L68.3 559 L70 566 M73.7 616.5 H116.7 M116.7 612 V621 L128.8 616.5 Z M119 614.5 L126 616.5 L119 618.5"/><path d="M66 536.5 L70.3 542.5 L74.8 536.5 M70.3 542.5 V548.7 M138.5 611.5 L147 623 M147 611.5 L138.5 623"/></g></svg>
<div class="a" style="left:54px;top:632px;width:916px;height:16px;background:#ECE9D8;border-bottom:1px solid #fff;border-top:1px solid #8A8A80"></div>
<div class="a" style="left:54px;top:633px;width:15px;height:14px;background:#ECE9D8;border:1px solid #fff;border-right-color:#ACA899;border-bottom-color:#ACA899"></div>
<div class="a" style="left:69px;top:633px;width:15px;height:14px;background:#ECE9D8;border:1px solid #fff;border-right-color:#ACA899;border-bottom-color:#ACA899"></div>
<div class="a" style="left:84px;top:633px;width:15px;height:14px;background:#ECE9D8;border:1px solid #fff;border-right-color:#ACA899;border-bottom-color:#ACA899"></div>
<div class="a" style="left:99px;top:633px;width:15px;height:14px;background:#ECE9D8;border:1px solid #fff;border-right-color:#ACA899;border-bottom-color:#ACA899"></div>
<svg class="a" style="left:54px;top:633px;" width="60" height="14" viewBox="0 0 60 14"><path d="M4 3 V11" stroke="#A8A898" stroke-width="1.5"/><path d="M11 3 L6 7 L11 11Z" fill="#A8A898"/><path d="M26 3 L21 7 L26 11Z" fill="#A8A898"/><path d="M35 3 L40 7 L35 11Z" fill="#A8A898"/><path d="M50 3 L55 7 L50 11Z" fill="#A8A898"/><path d="M56 3 V11" stroke="#A8A898" stroke-width="1.5"/></svg>
<svg class="a" style="left:113px;top:632px;" width="240" height="16" viewBox="0 0 240 16"><path d="M2 0 L60 0 L55 15 L7 15 Z" fill="#000"/><path d="M60 0 L55 15 L137 15 L142 0" fill="#ECE9D8" stroke="#808080" stroke-width="1"/><path d="M142 0 L137 15 L225 15 L230 0" fill="#ECE9D8" stroke="#808080" stroke-width="1"/></svg>
<div class="a t" style="left:127px;top:635px;color:#fff;font-size:11px">Modelo</div>
<div class="a t" style="left:178px;top:635px;font-size:11px;letter-spacing:-0.15px">Presentación1</div>
<div class="a t" style="left:263px;top:635px;font-size:11px;letter-spacing:-0.1px">Presentación2</div>
<div class="a" style="left:0px;top:648px;width:1024px;height:7px;background:#ECE9D8"></div>
<div class="a" style="left:0px;top:655px;width:1024px;height:2px;background:#000;border-bottom:1px solid #fff"></div>
<div class="a" style="left:0px;top:657px;width:1024px;height:54px;background:#ECE9D8"></div>
<div class="a" style="left:6px;top:664px;width:3px;height:41px;border-left:1px solid #fff;border-right:1px solid #ACA899"></div>
<div class="a" style="left:10px;top:664px;width:3px;height:41px;border-left:1px solid #fff;border-right:1px solid #ACA899"></div>
<div class="a" style="left:16px;top:666px;width:1010px;height:42px;background:#fff;border-top:2px solid #000;border-left:2px solid #404040"></div>
<div class="a" style="left:18px;top:692px;width:1006px;height:1px;background:#A0A0A0"></div>
<div class="a t" style="left:19px;top:669px;font-family:Liberation Mono,monospace;font-size:13px">Comando: _quit</div>
<div class="a t" style="left:19px;top:696px;font-family:Liberation Mono,monospace;font-size:13px">Comando:</div>
<div class="a" style="left:0px;top:710px;width:1024px;height:24px;background:#ECE9D8;border-top:1px solid #fff"></div>
<div class="a" style="left:5px;top:715px;width:168px;height:18px;border:1px solid #ACA899;border-right-color:#fff;border-bottom-color:#fff"></div>
<div class="a t" style="left:8px;top:718px;color:#A5A38E;font-size:12px;transform:scaleX(0.89);transform-origin:0 0">-0.0879, -0.1192, 0.0000</div>
<div class="a" style="left:177px;top:715px;width:39px;height:18px;background:#ECE9D8;border:1px solid #fff;border-right-color:#ACA899;border-bottom-color:#ACA899"></div>
<div class="a t" style="left:179px;top:718px;font-size:13px;transform:scaleX(0.86);transform-origin:0 0">FORZC</div>
<div class="a" style="left:221px;top:715px;width:45px;height:18px;background:#ECE9D8;border:1px solid #fff;border-right-color:#ACA899;border-bottom-color:#ACA899"></div>
<div class="a t" style="left:223px;top:718px;font-size:13px;transform:scaleX(0.86);transform-origin:0 0">REJILLA</div>
<div class="a" style="left:271px;top:715px;width:34px;height:18px;background:#ECE9D8;border:1px solid #fff;border-right-color:#ACA899;border-bottom-color:#ACA899"></div>
<div class="a t" style="left:273px;top:718px;font-size:13px;transform:scaleX(0.86);transform-origin:0 0">ORTO</div>
<div class="a" style="left:310px;top:715px;width:39px;height:18px;background:#ECE9D8;border:1px solid #fff;border-right-color:#ACA899;border-bottom-color:#ACA899"></div>
<div class="a t" style="left:312px;top:718px;font-size:13px;transform:scaleX(0.86);transform-origin:0 0">POLAR</div>
<div class="a" style="left:354px;top:715px;width:47px;height:18px;background:#ECE9D8;border-top:1px solid #000;border-left:1px solid #000;border-right:1px solid #fff;border-bottom:1px solid #fff;box-shadow:inset 1px 1px 0 #9A978A"></div>
<div class="a t" style="left:357px;top:718px;font-size:13px;transform:scaleX(0.86);transform-origin:0 0">REFENT</div>
<div class="a" style="left:405px;top:715px;width:56px;height:18px;background:#ECE9D8;border-top:1px solid #000;border-left:1px solid #000;border-right:1px solid #fff;border-bottom:1px solid #fff;box-shadow:inset 1px 1px 0 #9A978A"></div>
<div class="a t" style="left:408px;top:718px;font-size:13px;transform:scaleX(0.86);transform-origin:0 0">RASTREO</div>
<div class="a" style="left:465px;top:715px;width:35px;height:18px;background:#ECE9D8;border-top:1px solid #000;border-left:1px solid #000;border-right:1px solid #fff;border-bottom:1px solid #fff;box-shadow:inset 1px 1px 0 #9A978A"></div>
<div class="a t" style="left:468px;top:718px;font-size:13px;transform:scaleX(0.86);transform-origin:0 0">DUCS</div>
<div class="a" style="left:503px;top:715px;width:23px;height:18px;background:#ECE9D8;border-top:1px solid #000;border-left:1px solid #000;border-right:1px solid #fff;border-bottom:1px solid #fff;box-shadow:inset 1px 1px 0 #9A978A"></div>
<div class="a t" style="left:506px;top:718px;font-size:13px;transform:scaleX(0.86);transform-origin:0 0">DIN</div>
<div class="a" style="left:530px;top:715px;width:25px;height:18px;background:#ECE9D8;border:1px solid #fff;border-right-color:#ACA899;border-bottom-color:#ACA899"></div>
<div class="a t" style="left:532px;top:718px;font-size:13px;transform:scaleX(0.86);transform-origin:0 0">GLN</div>
<div class="a" style="left:560px;top:715px;width:50px;height:18px;background:#ECE9D8;border-top:1px solid #000;border-left:1px solid #000;border-right:1px solid #fff;border-bottom:1px solid #fff;box-shadow:inset 1px 1px 0 #9A978A"></div>
<div class="a t" style="left:563px;top:718px;font-size:13px;transform:scaleX(0.86);transform-origin:0 0">MODELO</div>
<div class="a t" style="left:749px;top:718px;font-size:12px;transform:scaleX(0.9);transform-origin:0 0">Escala de anotación:</div>
<div class="a t" style="left:856px;top:718px;font-size:12px;transform:scaleX(1);transform-origin:0 0">1:1</div>
<svg class="a" style="left:875px;top:722px;" width="8" height="5" viewBox="0 0 8 5"><path d="M0 0 H7 L3.5 4Z" fill="#000"/></svg>
<div class="a" style="left:938px;top:715px;width:42px;height:17px;background:#F4F3EC;border:1px solid #fff;border-right-color:#ACA899;border-bottom-color:#ACA899"></div>
<svg class="a" style="left:894px;top:717px;" width="15" height="15" viewBox="0 0 15 15"><path d="M1 14 L5 5 L9 14 M3 10 H7" stroke="#3A6AB8" stroke-width="1.8" fill="none"/><circle cx="10" cy="5" r="3.5" fill="#F8E860" stroke="#C0A020"/><rect x="9" y="8" width="2" height="2" fill="#667"/></svg>
<svg class="a" style="left:918px;top:717px;" width="15" height="15" viewBox="0 0 15 15"><path d="M1 14 L5 5 L9 14 M3 10 H7" stroke="#A8A8A8" stroke-width="1.8" fill="none"/><path d="M6 10 L13 2" stroke="#A0A0A0" stroke-width="2"/><path d="M9 8 L12 10" stroke="#A0A0A0" stroke-width="1.5"/></svg>
<svg class="a" style="left:941px;top:716px;" width="17" height="15" viewBox="0 0 17 15"><path d="M9 7 V4 C9 1,15 1,15 4 V6" stroke="#807010" stroke-width="1.8" fill="none"/><rect x="1" y="6" width="11" height="8" fill="#D8C020" stroke="#605008"/><path d="M1 9 H12 M1 11.5 H12" stroke="#8A7A10"/></svg>
<svg class="a" style="left:962px;top:714px;" width="17" height="18" viewBox="0 0 17 18"><path d="M2 6 L6 2 L10 6" stroke="#6A8AC0" stroke-width="1.3" fill="none"/><rect x="5.5" y="6.5" width="10" height="10" fill="#fff" stroke="#3A5A90"/><path d="M7.5 9.5 H13.5 M7.5 12 H13.5 M7.5 14.5 H13.5" stroke="#3A5A90"/></svg>
<svg class="a" style="left:988px;top:726px;" width="8" height="5" viewBox="0 0 8 5"><path d="M0 0 H7 L3.5 4.5Z" fill="#000"/></svg>
<svg class="a" style="left:1004px;top:715px;" width="16" height="16" viewBox="0 0 16 16"><rect x="0.5" y="0.5" width="15" height="15" fill="#fff" stroke="#2A4A80"/><rect x="2" y="2" width="12" height="12" fill="#C8DAF2"/></svg>
<div class="a" style="left:0px;top:734px;width:1024px;height:4px;background:linear-gradient(#3168D5,#4993E6)"></div>
<svg class="a" style="left:676px;top:628px;" width="348" height="95" viewBox="0 0 348 95"><path d="M13 0.5 H332 Q344.5 0.5 344.5 13 V63 Q344.5 76.5 332 76.5 H264.5 L292.8 95 L245.3 76.5 H13 Q0.5 76.5 0.5 63 V13 Q0.5 0.5 13 0.5 Z" fill="#FFFFE1" stroke="#000" stroke-width="1.6"/></svg>
<svg class="a" style="left:686px;top:637px;" width="17" height="17" viewBox="0 0 17 17"><circle cx="8.5" cy="8" r="7.5" fill="#CFE0F8" stroke="#6E90C8"/><circle cx="8.5" cy="4.2" r="1.3" fill="#1F3F8F"/><path d="M7.2 6.5 H9.6 V12.5 H7.2Z" fill="#1F3F8F"/></svg>
<div class="a t" style="left:713px;top:640px;font-weight:bold;font-size:11px;letter-spacing:0.45px">Trazado y publicación del trabajo completados</div>
<div class="a" style="left:996px;top:638px;width:16px;height:16px;background:#F4F3EE;border:1px solid #B5B2A4"></div>
<svg class="a" style="left:999px;top:641px;" width="10" height="10" viewBox="0 0 10 10"><path d="M1 1 L9 9 M9 1 L1 9" stroke="#000" stroke-width="2.2"/></svg>
<div class="a t" style="left:692px;top:662px;font-size:11px;letter-spacing:-0.12px">No se han encontrado errores ni advertencias</div>
<div class="a t" style="left:692px;top:681px;font-size:11px;color:#0000CC;letter-spacing:-0.14px"><u>Haga clic para ver los detalles de trazado y publicación...</u></div>
</body></html>
